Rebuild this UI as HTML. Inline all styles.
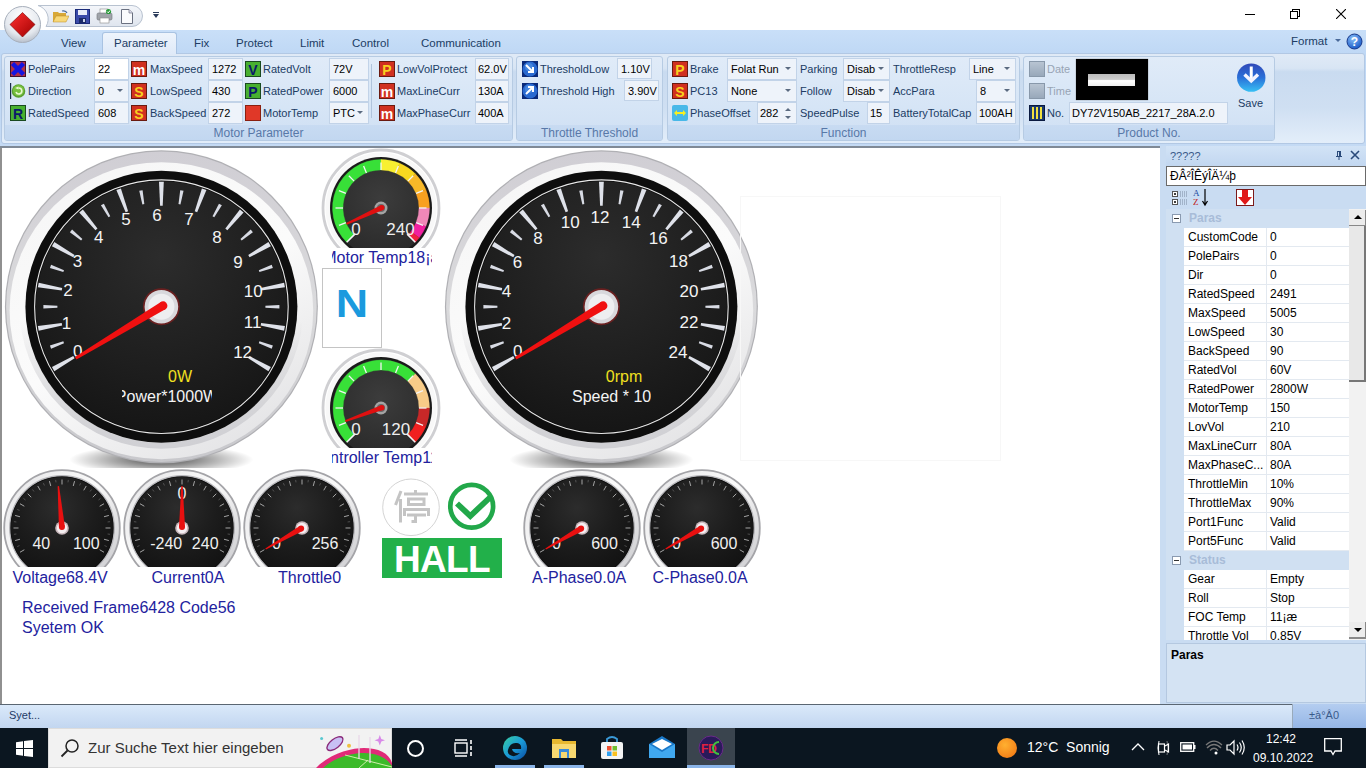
<!DOCTYPE html><html><head><meta charset="utf-8"><style>
*{margin:0;padding:0;box-sizing:border-box}
html,body{width:1366px;height:768px;overflow:hidden;background:#fff;font-family:"Liberation Sans",sans-serif;position:relative}
.a{position:absolute}
.t{position:absolute;white-space:nowrap;line-height:1}
</style></head><body>
<div class="a" style="left:0;top:0;width:1366px;height:30px;background:#fff"></div>
<div class="a" style="left:0;top:30px;width:1366px;height:116px;background:linear-gradient(#c9dff8 0,#bfd8f5 20%,#c4daf4 100%)"></div>
<div class="a" style="left:1px;top:53px;width:1364px;height:91px;border:1px solid #b2c8e4;border-radius:3px;background:linear-gradient(#e0eaf6 0%,#d8e5f4 16%,#c9dbf0 20%,#cfdff2 60%,#e3eefa 100%)"></div>
<div class="a" style="left:0;top:146px;width:1162px;height:2px;background:#808a96"></div>
<div class="a" style="left:0;top:148px;width:1160px;height:556px;background:#fff;border-left:2px solid #909090"></div>
<div class="a" style="left:1160px;top:146px;width:206px;height:558px;background:#c9dcf2"></div>
<svg class="a" style="left:0px;top:148px" width="322" height="320" viewBox="0 0 322 320">
<defs><radialGradient id="g1sh" cx="0.5" cy="0.5" r="0.5"><stop offset="0.3" stop-color="#000" stop-opacity="0.5"/><stop offset="1" stop-color="#000" stop-opacity="0"/></radialGradient><linearGradient id="g1ch" x1="0" y1="0" x2="0" y2="1"><stop offset="0" stop-color="#d0ced4"/><stop offset="0.5" stop-color="#dadadc"/><stop offset="1" stop-color="#c8c8cc"/></linearGradient><linearGradient id="g1cl" x1="0.2" y1="0" x2="0.8" y2="1"><stop offset="0" stop-color="#f6f6f6"/><stop offset="0.5" stop-color="#fbfbfb"/><stop offset="1" stop-color="#e2e2e4"/></linearGradient><radialGradient id="g1fc" cx="0.5" cy="0.3" r="0.75"><stop offset="0" stop-color="#2c2c2c"/><stop offset="0.6" stop-color="#1e1e1e"/><stop offset="1" stop-color="#141414"/></radialGradient><linearGradient id="g1ib" x1="0" y1="0" x2="0" y2="1"><stop offset="0" stop-color="#c0c0c4" stop-opacity="0"/><stop offset="0.55" stop-color="#c0c0c4" stop-opacity="0"/><stop offset="1" stop-color="#d0d0d4" stop-opacity="1"/></linearGradient><linearGradient id="g1tk" x1="0" y1="0" x2="1" y2="0"><stop offset="0" stop-color="#c8ccd8"/><stop offset="1" stop-color="#f0f2f8"/></linearGradient></defs>
<ellipse cx="161.4" cy="311.7" rx="92" ry="15" fill="url(#g1sh)"/>
<circle cx="161.4" cy="158.7" r="156.5" fill="#b0b0b4"/>
<circle cx="161.4" cy="158.7" r="155.3" fill="url(#g1ch)"/>
<ellipse cx="161.4" cy="162.7" rx="151.8" ry="148.5" fill="url(#g1cl)"/>
<circle cx="161.4" cy="158.7" r="139" fill="none" stroke="url(#g1ib)" stroke-width="6"/>
<circle cx="161.4" cy="158.7" r="136" fill="#0e0e0e"/>
<circle cx="161.4" cy="158.7" r="126.8" fill="none" stroke="#e8e8e8" stroke-width="1.1"/>
<circle cx="161.4" cy="158.7" r="125.5" fill="url(#g1fc)"/>
<path d="M51.95 219.12 L54.35 223.28 L74.58 210.33 L73.28 208.07 Z" fill="#dfe2ea"/>
<path d="M37.88 178.04 L38.72 182.77 L62.16 177.52 L61.71 174.96 Z" fill="#dfe2ea"/>
<path d="M38.72 134.63 L37.88 139.36 L61.71 142.44 L62.16 139.88 Z" fill="#dfe2ea"/>
<path d="M54.35 94.12 L51.95 98.28 L73.28 109.33 L74.58 107.07 Z" fill="#dfe2ea"/>
<path d="M82.89 61.40 L79.21 64.49 L95.48 82.17 L97.47 80.49 Z" fill="#dfe2ea"/>
<path d="M120.90 40.42 L116.39 42.06 L125.63 64.24 L128.08 63.35 Z" fill="#dfe2ea"/>
<path d="M163.80 33.70 L159.00 33.70 L160.10 57.70 L162.70 57.70 Z" fill="#dfe2ea"/>
<path d="M206.41 42.06 L201.90 40.42 L194.72 63.35 L197.17 64.24 Z" fill="#dfe2ea"/>
<path d="M243.59 64.49 L239.91 61.40 L225.33 80.49 L227.32 82.17 Z" fill="#dfe2ea"/>
<path d="M270.85 98.28 L268.45 94.12 L248.22 107.07 L249.52 109.33 Z" fill="#dfe2ea"/>
<path d="M284.92 139.36 L284.08 134.63 L260.64 139.88 L261.09 142.44 Z" fill="#dfe2ea"/>
<path d="M284.08 182.77 L284.92 178.04 L261.09 174.96 L260.64 177.52 Z" fill="#dfe2ea"/>
<path d="M268.45 223.28 L270.85 219.12 L249.52 208.07 L248.22 210.33 Z" fill="#dfe2ea"/>
<path d="M49.93 197.46 L51.10 200.66 L64.01 195.21 L63.33 193.33 Z" fill="#d8dbe4"/>
<path d="M43.40 157.00 L43.40 160.40 L57.40 159.70 L57.40 157.70 Z" fill="#d8dbe4"/>
<path d="M51.10 116.74 L49.93 119.94 L63.33 124.07 L64.01 122.19 Z" fill="#d8dbe4"/>
<path d="M72.10 81.55 L69.91 84.15 L81.09 92.62 L82.37 91.08 Z" fill="#d8dbe4"/>
<path d="M103.87 55.66 L100.93 57.36 L108.53 69.13 L110.27 68.13 Z" fill="#d8dbe4"/>
<path d="M142.58 42.20 L139.24 42.79 L142.36 56.45 L144.33 56.11 Z" fill="#d8dbe4"/>
<path d="M183.56 42.79 L180.22 42.20 L178.47 56.11 L180.44 56.45 Z" fill="#d8dbe4"/>
<path d="M221.87 57.36 L218.93 55.66 L212.53 68.13 L214.27 69.13 Z" fill="#d8dbe4"/>
<path d="M252.89 84.15 L250.70 81.55 L240.43 91.08 L241.71 92.62 Z" fill="#d8dbe4"/>
<path d="M272.87 119.94 L271.70 116.74 L258.79 122.19 L259.47 124.07 Z" fill="#d8dbe4"/>
<path d="M279.40 160.40 L279.40 157.00 L265.40 157.70 L265.40 159.70 Z" fill="#d8dbe4"/>
<path d="M271.70 200.66 L272.87 197.46 L259.47 193.33 L258.79 195.21 Z" fill="#d8dbe4"/>
<text x="77.8" y="209.4" font-size="17" font-family="Liberation Sans" fill="#f4f4f4" text-anchor="middle">0</text>
<text x="66.6" y="181.0" font-size="17" font-family="Liberation Sans" fill="#f4f4f4" text-anchor="middle">1</text>
<text x="67.9" y="148.4" font-size="17" font-family="Liberation Sans" fill="#f4f4f4" text-anchor="middle">2</text>
<text x="77.4" y="119.2" font-size="17" font-family="Liberation Sans" fill="#f4f4f4" text-anchor="middle">3</text>
<text x="98.8" y="94.6" font-size="17" font-family="Liberation Sans" fill="#f4f4f4" text-anchor="middle">4</text>
<text x="125.9" y="77.4" font-size="17" font-family="Liberation Sans" fill="#f4f4f4" text-anchor="middle">5</text>
<text x="156.9" y="73.2" font-size="17" font-family="Liberation Sans" fill="#f4f4f4" text-anchor="middle">6</text>
<text x="189.1" y="77.4" font-size="17" font-family="Liberation Sans" fill="#f4f4f4" text-anchor="middle">7</text>
<text x="217.0" y="94.6" font-size="17" font-family="Liberation Sans" fill="#f4f4f4" text-anchor="middle">8</text>
<text x="237.9" y="120.0" font-size="17" font-family="Liberation Sans" fill="#f4f4f4" text-anchor="middle">9</text>
<text x="253.3" y="149.0" font-size="17" font-family="Liberation Sans" fill="#f4f4f4" text-anchor="middle">10</text>
<text x="252.7" y="180.0" font-size="17" font-family="Liberation Sans" fill="#f4f4f4" text-anchor="middle">11</text>
<text x="242.6" y="210.0" font-size="17" font-family="Liberation Sans" fill="#f4f4f4" text-anchor="middle">12</text>
</svg>
<svg class="a" style="left:440px;top:148px" width="322" height="320" viewBox="0 0 322 320">
<defs><radialGradient id="g2sh" cx="0.5" cy="0.5" r="0.5"><stop offset="0.3" stop-color="#000" stop-opacity="0.5"/><stop offset="1" stop-color="#000" stop-opacity="0"/></radialGradient><linearGradient id="g2ch" x1="0" y1="0" x2="0" y2="1"><stop offset="0" stop-color="#d0ced4"/><stop offset="0.5" stop-color="#dadadc"/><stop offset="1" stop-color="#c8c8cc"/></linearGradient><linearGradient id="g2cl" x1="0.2" y1="0" x2="0.8" y2="1"><stop offset="0" stop-color="#f6f6f6"/><stop offset="0.5" stop-color="#fbfbfb"/><stop offset="1" stop-color="#e2e2e4"/></linearGradient><radialGradient id="g2fc" cx="0.5" cy="0.3" r="0.75"><stop offset="0" stop-color="#2c2c2c"/><stop offset="0.6" stop-color="#1e1e1e"/><stop offset="1" stop-color="#141414"/></radialGradient><linearGradient id="g2ib" x1="0" y1="0" x2="0" y2="1"><stop offset="0" stop-color="#c0c0c4" stop-opacity="0"/><stop offset="0.55" stop-color="#c0c0c4" stop-opacity="0"/><stop offset="1" stop-color="#d0d0d4" stop-opacity="1"/></linearGradient><linearGradient id="g2tk" x1="0" y1="0" x2="1" y2="0"><stop offset="0" stop-color="#c8ccd8"/><stop offset="1" stop-color="#f0f2f8"/></linearGradient></defs>
<ellipse cx="161.4" cy="311.7" rx="92" ry="15" fill="url(#g2sh)"/>
<circle cx="161.4" cy="158.7" r="156.5" fill="#b0b0b4"/>
<circle cx="161.4" cy="158.7" r="155.3" fill="url(#g2ch)"/>
<ellipse cx="161.4" cy="162.7" rx="151.8" ry="148.5" fill="url(#g2cl)"/>
<circle cx="161.4" cy="158.7" r="139" fill="none" stroke="url(#g2ib)" stroke-width="6"/>
<circle cx="161.4" cy="158.7" r="136" fill="#0e0e0e"/>
<circle cx="161.4" cy="158.7" r="126.8" fill="none" stroke="#e8e8e8" stroke-width="1.1"/>
<circle cx="161.4" cy="158.7" r="125.5" fill="url(#g2fc)"/>
<path d="M51.95 219.12 L54.35 223.28 L74.58 210.33 L73.28 208.07 Z" fill="#dfe2ea"/>
<path d="M37.88 178.04 L38.72 182.77 L62.16 177.52 L61.71 174.96 Z" fill="#dfe2ea"/>
<path d="M38.72 134.63 L37.88 139.36 L61.71 142.44 L62.16 139.88 Z" fill="#dfe2ea"/>
<path d="M54.35 94.12 L51.95 98.28 L73.28 109.33 L74.58 107.07 Z" fill="#dfe2ea"/>
<path d="M82.89 61.40 L79.21 64.49 L95.48 82.17 L97.47 80.49 Z" fill="#dfe2ea"/>
<path d="M120.90 40.42 L116.39 42.06 L125.63 64.24 L128.08 63.35 Z" fill="#dfe2ea"/>
<path d="M163.80 33.70 L159.00 33.70 L160.10 57.70 L162.70 57.70 Z" fill="#dfe2ea"/>
<path d="M206.41 42.06 L201.90 40.42 L194.72 63.35 L197.17 64.24 Z" fill="#dfe2ea"/>
<path d="M243.59 64.49 L239.91 61.40 L225.33 80.49 L227.32 82.17 Z" fill="#dfe2ea"/>
<path d="M270.85 98.28 L268.45 94.12 L248.22 107.07 L249.52 109.33 Z" fill="#dfe2ea"/>
<path d="M284.92 139.36 L284.08 134.63 L260.64 139.88 L261.09 142.44 Z" fill="#dfe2ea"/>
<path d="M284.08 182.77 L284.92 178.04 L261.09 174.96 L260.64 177.52 Z" fill="#dfe2ea"/>
<path d="M268.45 223.28 L270.85 219.12 L249.52 208.07 L248.22 210.33 Z" fill="#dfe2ea"/>
<path d="M49.93 197.46 L51.10 200.66 L64.01 195.21 L63.33 193.33 Z" fill="#d8dbe4"/>
<path d="M43.40 157.00 L43.40 160.40 L57.40 159.70 L57.40 157.70 Z" fill="#d8dbe4"/>
<path d="M51.10 116.74 L49.93 119.94 L63.33 124.07 L64.01 122.19 Z" fill="#d8dbe4"/>
<path d="M72.10 81.55 L69.91 84.15 L81.09 92.62 L82.37 91.08 Z" fill="#d8dbe4"/>
<path d="M103.87 55.66 L100.93 57.36 L108.53 69.13 L110.27 68.13 Z" fill="#d8dbe4"/>
<path d="M142.58 42.20 L139.24 42.79 L142.36 56.45 L144.33 56.11 Z" fill="#d8dbe4"/>
<path d="M183.56 42.79 L180.22 42.20 L178.47 56.11 L180.44 56.45 Z" fill="#d8dbe4"/>
<path d="M221.87 57.36 L218.93 55.66 L212.53 68.13 L214.27 69.13 Z" fill="#d8dbe4"/>
<path d="M252.89 84.15 L250.70 81.55 L240.43 91.08 L241.71 92.62 Z" fill="#d8dbe4"/>
<path d="M272.87 119.94 L271.70 116.74 L258.79 122.19 L259.47 124.07 Z" fill="#d8dbe4"/>
<path d="M279.40 160.40 L279.40 157.00 L265.40 157.70 L265.40 159.70 Z" fill="#d8dbe4"/>
<path d="M271.70 200.66 L272.87 197.46 L259.47 193.33 L258.79 195.21 Z" fill="#d8dbe4"/>
<text x="77.8" y="209.4" font-size="17" font-family="Liberation Sans" fill="#f4f4f4" text-anchor="middle">0</text>
<text x="66.6" y="181.0" font-size="17" font-family="Liberation Sans" fill="#f4f4f4" text-anchor="middle">2</text>
<text x="66.6" y="149.0" font-size="17" font-family="Liberation Sans" fill="#f4f4f4" text-anchor="middle">4</text>
<text x="77.4" y="120.0" font-size="17" font-family="Liberation Sans" fill="#f4f4f4" text-anchor="middle">6</text>
<text x="98.0" y="96.0" font-size="17" font-family="Liberation Sans" fill="#f4f4f4" text-anchor="middle">8</text>
<text x="130.2" y="79.7" font-size="17" font-family="Liberation Sans" fill="#f4f4f4" text-anchor="middle">10</text>
<text x="159.9" y="75.4" font-size="17" font-family="Liberation Sans" fill="#f4f4f4" text-anchor="middle">12</text>
<text x="191.2" y="79.7" font-size="17" font-family="Liberation Sans" fill="#f4f4f4" text-anchor="middle">14</text>
<text x="218.3" y="96.0" font-size="17" font-family="Liberation Sans" fill="#f4f4f4" text-anchor="middle">16</text>
<text x="238.5" y="119.0" font-size="17" font-family="Liberation Sans" fill="#f4f4f4" text-anchor="middle">18</text>
<text x="248.9" y="149.0" font-size="17" font-family="Liberation Sans" fill="#f4f4f4" text-anchor="middle">20</text>
<text x="249.0" y="180.0" font-size="17" font-family="Liberation Sans" fill="#f4f4f4" text-anchor="middle">22</text>
<text x="238.0" y="210.0" font-size="17" font-family="Liberation Sans" fill="#f4f4f4" text-anchor="middle">24</text>
</svg>
<svg class="a" style="left:0;top:0;overflow:visible" width="1" height="1">
<circle cx="161.4" cy="306.7" r="18.5" fill="#6a2020"/>
<circle cx="161.4" cy="306.7" r="16.8" fill="#d8d8dc"/>
<circle cx="161.4" cy="306.7" r="13" fill="#eeeef0"/>
<path d="M160.90 301.98 L74.91 356.92 L76.46 359.49 L165.33 309.36 Z" fill="#f01010"/><circle cx="163.11" cy="305.67" r="4.3" fill="#f01010"/>
</svg>
<div class="t" style="left:140px;top:369px;width:80px;text-align:center;font-size:16px;color:#f0e020">0W</div>
<div class="a" style="left:122px;top:385px;width:90px;height:22px;overflow:hidden"><div class="t" style="left:45px;top:4px;font-size:16px;color:#f4f4f4;transform:translateX(-50%)">Power*1000W</div></div>
<svg class="a" style="left:0;top:0;overflow:visible" width="1" height="1">
<circle cx="601.4" cy="306.7" r="18.5" fill="#6a2020"/>
<circle cx="601.4" cy="306.7" r="16.8" fill="#d8d8dc"/>
<circle cx="601.4" cy="306.7" r="13" fill="#eeeef0"/>
<path d="M600.90 301.98 L514.91 356.92 L516.46 359.49 L605.33 309.36 Z" fill="#f01010"/><circle cx="603.11" cy="305.67" r="4.3" fill="#f01010"/>
</svg>
<div class="t" style="left:584px;top:369px;width:80px;text-align:center;font-size:16px;color:#f0e020">0rpm</div>
<div class="a" style="left:560px;top:385px;width:91px;height:22px;overflow:hidden"><div class="t" style="left:12px;top:4px;font-size:16px;color:#f4f4f4;">Speed * 1000rpm</div></div>
<svg class="a" style="left:321px;top:147.7px" width="120" height="100.30000000000001" viewBox="321 147.7 120 100.30000000000001">
<defs><radialGradient id="g3f" cx="0.5" cy="0.4" r="0.6"><stop offset="0" stop-color="#3c3c3c"/><stop offset="1" stop-color="#2a2a2a"/></radialGradient></defs>
<circle cx="381" cy="207.7" r="58" fill="none" stroke="#cfcfd2" stroke-width="2.8"/>
<circle cx="381" cy="207.7" r="55.5" fill="#f8f8f8"/>
<circle cx="381" cy="207.7" r="51" fill="#1a1a1a"/>
<circle cx="381" cy="207.7" r="48.5" fill="url(#g3f)"/>
<path d="M346.71 241.99 A48.5 48.5 0 0 1 381.00 159.20 L381.00 169.70 A38 38 0 0 0 354.13 234.57 Z" fill="#38e038" stroke="#38e038" stroke-width="0.3"/>
<path d="M381.00 159.20 A48.5 48.5 0 0 1 399.56 162.89 L395.54 172.59 A38 38 0 0 0 381.00 169.70 Z" fill="#f8f030" stroke="#f8f030" stroke-width="0.3"/>
<path d="M399.56 162.89 A48.5 48.5 0 0 1 415.29 173.41 L407.87 180.83 A38 38 0 0 0 395.54 172.59 Z" fill="#f8d820" stroke="#f8d820" stroke-width="0.3"/>
<path d="M415.29 173.41 A48.5 48.5 0 0 1 425.81 189.14 L416.11 193.16 A38 38 0 0 0 407.87 180.83 Z" fill="#f8b828" stroke="#f8b828" stroke-width="0.3"/>
<path d="M425.81 189.14 A48.5 48.5 0 0 1 429.50 207.70 L419.00 207.70 A38 38 0 0 0 416.11 193.16 Z" fill="#f8a020" stroke="#f8a020" stroke-width="0.3"/>
<path d="M429.50 207.70 A48.5 48.5 0 0 1 425.81 226.26 L416.11 222.24 A38 38 0 0 0 419.00 207.70 Z" fill="#f088b8" stroke="#f088b8" stroke-width="0.3"/>
<path d="M425.81 226.26 A48.5 48.5 0 0 1 419.22 237.56 L410.94 231.10 A38 38 0 0 0 416.11 222.24 Z" fill="#f020a0" stroke="#f020a0" stroke-width="0.3"/>
<path d="M419.22 237.56 A48.5 48.5 0 0 1 415.29 241.99 L407.87 234.57 A38 38 0 0 0 410.94 231.10 Z" fill="#f02040" stroke="#f02040" stroke-width="0.3"/>
<line x1="354.84" y1="233.86" x2="346.71" y2="241.99" stroke="#f4f4f4" stroke-width="1.6"/>
<line x1="345.89" y1="222.24" x2="338.96" y2="225.11" stroke="#f4f4f4" stroke-width="1.3"/>
<line x1="343.00" y1="207.70" x2="335.50" y2="207.70" stroke="#f4f4f4" stroke-width="1.3"/>
<line x1="345.89" y1="193.16" x2="338.96" y2="190.29" stroke="#f4f4f4" stroke-width="1.3"/>
<line x1="354.13" y1="180.83" x2="348.83" y2="175.53" stroke="#f4f4f4" stroke-width="1.3"/>
<line x1="366.46" y1="172.59" x2="363.59" y2="165.66" stroke="#f4f4f4" stroke-width="1.3"/>
<line x1="381.00" y1="169.70" x2="381.00" y2="162.20" stroke="#f4f4f4" stroke-width="1.3"/>
<line x1="395.54" y1="172.59" x2="398.41" y2="165.66" stroke="#f4f4f4" stroke-width="1.3"/>
<line x1="407.87" y1="180.83" x2="413.17" y2="175.53" stroke="#f4f4f4" stroke-width="1.3"/>
<line x1="416.11" y1="193.16" x2="423.04" y2="190.29" stroke="#f4f4f4" stroke-width="1.3"/>
<line x1="419.00" y1="207.70" x2="426.50" y2="207.70" stroke="#f4f4f4" stroke-width="1.3"/>
<line x1="416.11" y1="222.24" x2="423.04" y2="225.11" stroke="#f4f4f4" stroke-width="1.3"/>
<line x1="407.16" y1="233.86" x2="415.29" y2="241.99" stroke="#f4f4f4" stroke-width="1.6"/>
<text x="356" y="234.7" font-size="17" font-family="Liberation Sans" fill="#eee" text-anchor="middle">0</text>
<text x="400.5" y="234.7" font-size="17" font-family="Liberation Sans" fill="#eee" text-anchor="middle">240</text>
<circle cx="381" cy="207.7" r="6.5" fill="#a4a4a4"/><circle cx="381" cy="207.7" r="4" fill="#6a6a6a"/>
<path d="M380.82 204.92 L346.07 222.70 L346.91 224.52 L383.00 209.64 Z" fill="#e01010"/><circle cx="381.91" cy="207.28" r="2.6" fill="#e01010"/>
</svg>
<div class="a" style="left:332px;top:248px;width:100px;height:20px;overflow:hidden"><div class="t" style="left:52px;top:2px;transform:translateX(-50%);font-size:16px;color:#22229e">Motor Temp18¡æ</div></div>
<svg class="a" style="left:321px;top:348px" width="120" height="100" viewBox="321 348 120 100">
<defs><radialGradient id="g4f" cx="0.5" cy="0.4" r="0.6"><stop offset="0" stop-color="#3c3c3c"/><stop offset="1" stop-color="#2a2a2a"/></radialGradient></defs>
<circle cx="381" cy="408" r="58" fill="none" stroke="#cfcfd2" stroke-width="2.8"/>
<circle cx="381" cy="408" r="55.5" fill="#f8f8f8"/>
<circle cx="381" cy="408" r="51" fill="#1a1a1a"/>
<circle cx="381" cy="408" r="48.5" fill="url(#g4f)"/>
<path d="M346.71 442.29 A48.5 48.5 0 0 1 415.29 373.71 L407.87 381.13 A38 38 0 0 0 354.13 434.87 Z" fill="#38e038" stroke="#38e038" stroke-width="0.3"/>
<path d="M415.29 373.71 A48.5 48.5 0 0 1 429.50 408.00 L419.00 408.00 A38 38 0 0 0 407.87 381.13 Z" fill="#f8cc88" stroke="#f8cc88" stroke-width="0.3"/>
<path d="M429.50 408.00 A48.5 48.5 0 0 1 425.81 426.56 L416.11 422.54 A38 38 0 0 0 419.00 408.00 Z" fill="#c82828" stroke="#c82828" stroke-width="0.3"/>
<path d="M425.81 426.56 A48.5 48.5 0 0 1 415.29 442.29 L407.87 434.87 A38 38 0 0 0 416.11 422.54 Z" fill="#f02020" stroke="#f02020" stroke-width="0.3"/>
<line x1="354.84" y1="434.16" x2="346.71" y2="442.29" stroke="#f4f4f4" stroke-width="1.6"/>
<line x1="345.89" y1="422.54" x2="338.96" y2="425.41" stroke="#f4f4f4" stroke-width="1.3"/>
<line x1="343.00" y1="408.00" x2="335.50" y2="408.00" stroke="#f4f4f4" stroke-width="1.3"/>
<line x1="345.89" y1="393.46" x2="338.96" y2="390.59" stroke="#f4f4f4" stroke-width="1.3"/>
<line x1="354.13" y1="381.13" x2="348.83" y2="375.83" stroke="#f4f4f4" stroke-width="1.3"/>
<line x1="366.46" y1="372.89" x2="363.59" y2="365.96" stroke="#f4f4f4" stroke-width="1.3"/>
<line x1="381.00" y1="370.00" x2="381.00" y2="362.50" stroke="#f4f4f4" stroke-width="1.3"/>
<line x1="395.54" y1="372.89" x2="398.41" y2="365.96" stroke="#f4f4f4" stroke-width="1.3"/>
<line x1="407.87" y1="381.13" x2="413.17" y2="375.83" stroke="#f4f4f4" stroke-width="1.3"/>
<line x1="416.11" y1="393.46" x2="423.04" y2="390.59" stroke="#f4f4f4" stroke-width="1.3"/>
<line x1="419.00" y1="408.00" x2="426.50" y2="408.00" stroke="#f4f4f4" stroke-width="1.3"/>
<line x1="416.11" y1="422.54" x2="423.04" y2="425.41" stroke="#f4f4f4" stroke-width="1.3"/>
<line x1="407.16" y1="434.16" x2="415.29" y2="442.29" stroke="#f4f4f4" stroke-width="1.6"/>
<text x="356" y="435" font-size="17" font-family="Liberation Sans" fill="#eee" text-anchor="middle">0</text>
<text x="396" y="435" font-size="17" font-family="Liberation Sans" fill="#eee" text-anchor="middle">120</text>
<circle cx="381" cy="408" r="6.5" fill="#a4a4a4"/><circle cx="381" cy="408" r="4" fill="#6a6a6a"/>
<path d="M381.04 405.21 L345.00 420.21 L345.69 422.09 L382.84 410.09 Z" fill="#e01010"/><circle cx="381.94" cy="407.65" r="2.6" fill="#e01010"/>
</svg>
<div class="a" style="left:332px;top:448px;width:100px;height:20px;overflow:hidden"><div class="t" style="left:52px;top:2px;transform:translateX(-50%);font-size:16px;color:#22229e">Controller Temp11¡æ</div></div>
<div class="a" style="left:322px;top:268px;width:60px;height:80px;border:1px solid #c4c4c4;background:#fff"></div>
<div class="t" style="left:322px;top:285px;width:60px;text-align:center;font-size:38px;font-weight:bold;color:#1a9ade;transform:scaleX(1.18)">N</div>
<svg class="a" style="left:1.7000000000000028px;top:467.6px" width="120" height="99.39999999999998" viewBox="1.7000000000000028 467.6 120 99.39999999999998">
<defs><linearGradient id="g5c" x1="0" y1="0" x2="1" y2="1"><stop offset="0" stop-color="#e4e4e6"/><stop offset="0.45" stop-color="#fafafa"/><stop offset="1" stop-color="#c4c4c8"/></linearGradient><radialGradient id="g5f" cx="0.45" cy="0.3" r="0.7"><stop offset="0" stop-color="#2c2c2c"/><stop offset="0.55" stop-color="#1c1c1c"/><stop offset="1" stop-color="#121212"/></radialGradient></defs>
<circle cx="61.7" cy="527.6" r="57.8" fill="url(#g5c)" stroke="#a4a4a8" stroke-width="1.8"/>
<circle cx="61.7" cy="527.6" r="52.3" fill="#0e0e0e" stroke="#b8b8bc" stroke-width="1.2"/>
<circle cx="61.7" cy="527.6" r="51" fill="url(#g5f)"/>
<line x1="24.03" y1="549.35" x2="19.70" y2="551.85" stroke="#d4d4d4" stroke-width="1" opacity="0.75"/>
<line x1="19.68" y1="538.86" x2="14.85" y2="540.15" stroke="#d4d4d4" stroke-width="1" opacity="0.75"/>
<line x1="18.20" y1="527.60" x2="13.20" y2="527.60" stroke="#d4d4d4" stroke-width="1" opacity="0.75"/>
<line x1="19.68" y1="516.34" x2="14.85" y2="515.05" stroke="#d4d4d4" stroke-width="1" opacity="0.75"/>
<line x1="24.03" y1="505.85" x2="19.70" y2="503.35" stroke="#d4d4d4" stroke-width="1" opacity="0.75"/>
<line x1="30.94" y1="496.84" x2="27.41" y2="493.31" stroke="#d4d4d4" stroke-width="1" opacity="0.75"/>
<line x1="39.95" y1="489.93" x2="37.45" y2="485.60" stroke="#d4d4d4" stroke-width="1" opacity="0.75"/>
<line x1="50.44" y1="485.58" x2="49.15" y2="480.75" stroke="#d4d4d4" stroke-width="1" opacity="0.75"/>
<line x1="61.70" y1="484.10" x2="61.70" y2="479.10" stroke="#d4d4d4" stroke-width="1" opacity="0.75"/>
<line x1="72.96" y1="485.58" x2="74.25" y2="480.75" stroke="#d4d4d4" stroke-width="1" opacity="0.75"/>
<line x1="83.45" y1="489.93" x2="85.95" y2="485.60" stroke="#d4d4d4" stroke-width="1" opacity="0.75"/>
<line x1="92.46" y1="496.84" x2="95.99" y2="493.31" stroke="#d4d4d4" stroke-width="1" opacity="0.75"/>
<line x1="99.37" y1="505.85" x2="103.70" y2="503.35" stroke="#d4d4d4" stroke-width="1" opacity="0.75"/>
<line x1="103.72" y1="516.34" x2="108.55" y2="515.05" stroke="#d4d4d4" stroke-width="1" opacity="0.75"/>
<line x1="105.20" y1="527.60" x2="110.20" y2="527.60" stroke="#d4d4d4" stroke-width="1" opacity="0.75"/>
<line x1="103.72" y1="538.86" x2="108.55" y2="540.15" stroke="#d4d4d4" stroke-width="1" opacity="0.75"/>
<line x1="99.37" y1="549.35" x2="103.70" y2="551.85" stroke="#d4d4d4" stroke-width="1" opacity="0.75"/>
<line x1="19.20" y1="545.20" x2="16.89" y2="546.16" stroke="#a0a0a0" stroke-width="0.8" opacity="0.5"/>
<line x1="16.09" y1="533.60" x2="13.61" y2="533.93" stroke="#a0a0a0" stroke-width="0.8" opacity="0.5"/>
<line x1="16.09" y1="521.60" x2="13.61" y2="521.27" stroke="#a0a0a0" stroke-width="0.8" opacity="0.5"/>
<line x1="19.20" y1="510.00" x2="16.89" y2="509.04" stroke="#a0a0a0" stroke-width="0.8" opacity="0.5"/>
<line x1="25.21" y1="499.60" x2="23.22" y2="498.08" stroke="#a0a0a0" stroke-width="0.8" opacity="0.5"/>
<line x1="33.70" y1="491.11" x2="32.18" y2="489.12" stroke="#a0a0a0" stroke-width="0.8" opacity="0.5"/>
<line x1="44.10" y1="485.10" x2="43.14" y2="482.79" stroke="#a0a0a0" stroke-width="0.8" opacity="0.5"/>
<line x1="55.70" y1="481.99" x2="55.37" y2="479.51" stroke="#a0a0a0" stroke-width="0.8" opacity="0.5"/>
<line x1="67.70" y1="481.99" x2="68.03" y2="479.51" stroke="#a0a0a0" stroke-width="0.8" opacity="0.5"/>
<line x1="79.30" y1="485.10" x2="80.26" y2="482.79" stroke="#a0a0a0" stroke-width="0.8" opacity="0.5"/>
<line x1="89.70" y1="491.11" x2="91.22" y2="489.12" stroke="#a0a0a0" stroke-width="0.8" opacity="0.5"/>
<line x1="98.19" y1="499.60" x2="100.18" y2="498.08" stroke="#a0a0a0" stroke-width="0.8" opacity="0.5"/>
<line x1="104.20" y1="510.00" x2="106.51" y2="509.04" stroke="#a0a0a0" stroke-width="0.8" opacity="0.5"/>
<line x1="107.31" y1="521.60" x2="109.79" y2="521.27" stroke="#a0a0a0" stroke-width="0.8" opacity="0.5"/>
<line x1="107.31" y1="533.60" x2="109.79" y2="533.93" stroke="#a0a0a0" stroke-width="0.8" opacity="0.5"/>
<line x1="104.20" y1="545.20" x2="106.51" y2="546.16" stroke="#a0a0a0" stroke-width="0.8" opacity="0.5"/>
<text x="41" y="548.6" font-size="16" font-family="Liberation Sans" fill="#f0f0f0" text-anchor="middle">40</text>
<text x="86" y="548.6" font-size="16" font-family="Liberation Sans" fill="#f0f0f0" text-anchor="middle">100</text>
<circle cx="61.7" cy="527.6" r="6.8" fill="#c8b8bc"/><circle cx="61.7" cy="527.6" r="5.2" fill="#f4eef0"/>
<path d="M64.60 526.34 L58.74 485.70 L57.34 485.82 L58.62 526.87 Z" fill="#e81010"/><circle cx="61.61" cy="526.60" r="3.0" fill="#e81010"/>
</svg>
<div class="t" style="left:12.5px;top:570px;font-size:16px;color:#22229e">Voltage68.4V</div>
<svg class="a" style="left:121.80000000000001px;top:467.6px" width="120" height="99.39999999999998" viewBox="121.80000000000001 467.6 120 99.39999999999998">
<defs><linearGradient id="g6c" x1="0" y1="0" x2="1" y2="1"><stop offset="0" stop-color="#e4e4e6"/><stop offset="0.45" stop-color="#fafafa"/><stop offset="1" stop-color="#c4c4c8"/></linearGradient><radialGradient id="g6f" cx="0.45" cy="0.3" r="0.7"><stop offset="0" stop-color="#2c2c2c"/><stop offset="0.55" stop-color="#1c1c1c"/><stop offset="1" stop-color="#121212"/></radialGradient></defs>
<circle cx="181.8" cy="527.6" r="57.8" fill="url(#g6c)" stroke="#a4a4a8" stroke-width="1.8"/>
<circle cx="181.8" cy="527.6" r="52.3" fill="#0e0e0e" stroke="#b8b8bc" stroke-width="1.2"/>
<circle cx="181.8" cy="527.6" r="51" fill="url(#g6f)"/>
<line x1="144.13" y1="549.35" x2="139.80" y2="551.85" stroke="#d4d4d4" stroke-width="1" opacity="0.75"/>
<line x1="139.78" y1="538.86" x2="134.95" y2="540.15" stroke="#d4d4d4" stroke-width="1" opacity="0.75"/>
<line x1="138.30" y1="527.60" x2="133.30" y2="527.60" stroke="#d4d4d4" stroke-width="1" opacity="0.75"/>
<line x1="139.78" y1="516.34" x2="134.95" y2="515.05" stroke="#d4d4d4" stroke-width="1" opacity="0.75"/>
<line x1="144.13" y1="505.85" x2="139.80" y2="503.35" stroke="#d4d4d4" stroke-width="1" opacity="0.75"/>
<line x1="151.04" y1="496.84" x2="147.51" y2="493.31" stroke="#d4d4d4" stroke-width="1" opacity="0.75"/>
<line x1="160.05" y1="489.93" x2="157.55" y2="485.60" stroke="#d4d4d4" stroke-width="1" opacity="0.75"/>
<line x1="170.54" y1="485.58" x2="169.25" y2="480.75" stroke="#d4d4d4" stroke-width="1" opacity="0.75"/>
<line x1="181.80" y1="484.10" x2="181.80" y2="479.10" stroke="#d4d4d4" stroke-width="1" opacity="0.75"/>
<line x1="193.06" y1="485.58" x2="194.35" y2="480.75" stroke="#d4d4d4" stroke-width="1" opacity="0.75"/>
<line x1="203.55" y1="489.93" x2="206.05" y2="485.60" stroke="#d4d4d4" stroke-width="1" opacity="0.75"/>
<line x1="212.56" y1="496.84" x2="216.09" y2="493.31" stroke="#d4d4d4" stroke-width="1" opacity="0.75"/>
<line x1="219.47" y1="505.85" x2="223.80" y2="503.35" stroke="#d4d4d4" stroke-width="1" opacity="0.75"/>
<line x1="223.82" y1="516.34" x2="228.65" y2="515.05" stroke="#d4d4d4" stroke-width="1" opacity="0.75"/>
<line x1="225.30" y1="527.60" x2="230.30" y2="527.60" stroke="#d4d4d4" stroke-width="1" opacity="0.75"/>
<line x1="223.82" y1="538.86" x2="228.65" y2="540.15" stroke="#d4d4d4" stroke-width="1" opacity="0.75"/>
<line x1="219.47" y1="549.35" x2="223.80" y2="551.85" stroke="#d4d4d4" stroke-width="1" opacity="0.75"/>
<line x1="139.30" y1="545.20" x2="136.99" y2="546.16" stroke="#a0a0a0" stroke-width="0.8" opacity="0.5"/>
<line x1="136.19" y1="533.60" x2="133.71" y2="533.93" stroke="#a0a0a0" stroke-width="0.8" opacity="0.5"/>
<line x1="136.19" y1="521.60" x2="133.71" y2="521.27" stroke="#a0a0a0" stroke-width="0.8" opacity="0.5"/>
<line x1="139.30" y1="510.00" x2="136.99" y2="509.04" stroke="#a0a0a0" stroke-width="0.8" opacity="0.5"/>
<line x1="145.31" y1="499.60" x2="143.32" y2="498.08" stroke="#a0a0a0" stroke-width="0.8" opacity="0.5"/>
<line x1="153.80" y1="491.11" x2="152.28" y2="489.12" stroke="#a0a0a0" stroke-width="0.8" opacity="0.5"/>
<line x1="164.20" y1="485.10" x2="163.24" y2="482.79" stroke="#a0a0a0" stroke-width="0.8" opacity="0.5"/>
<line x1="175.80" y1="481.99" x2="175.47" y2="479.51" stroke="#a0a0a0" stroke-width="0.8" opacity="0.5"/>
<line x1="187.80" y1="481.99" x2="188.13" y2="479.51" stroke="#a0a0a0" stroke-width="0.8" opacity="0.5"/>
<line x1="199.40" y1="485.10" x2="200.36" y2="482.79" stroke="#a0a0a0" stroke-width="0.8" opacity="0.5"/>
<line x1="209.80" y1="491.11" x2="211.32" y2="489.12" stroke="#a0a0a0" stroke-width="0.8" opacity="0.5"/>
<line x1="218.29" y1="499.60" x2="220.28" y2="498.08" stroke="#a0a0a0" stroke-width="0.8" opacity="0.5"/>
<line x1="224.30" y1="510.00" x2="226.61" y2="509.04" stroke="#a0a0a0" stroke-width="0.8" opacity="0.5"/>
<line x1="227.41" y1="521.60" x2="229.89" y2="521.27" stroke="#a0a0a0" stroke-width="0.8" opacity="0.5"/>
<line x1="227.41" y1="533.60" x2="229.89" y2="533.93" stroke="#a0a0a0" stroke-width="0.8" opacity="0.5"/>
<line x1="224.30" y1="545.20" x2="226.61" y2="546.16" stroke="#a0a0a0" stroke-width="0.8" opacity="0.5"/>
<text x="166" y="548.6" font-size="16" font-family="Liberation Sans" fill="#f0f0f0" text-anchor="middle">-240</text>
<text x="205" y="548.6" font-size="16" font-family="Liberation Sans" fill="#f0f0f0" text-anchor="middle">240</text>
<text x="181.8" y="498.6" font-size="16" font-family="Liberation Sans" fill="#f0f0f0" text-anchor="middle">0</text>
<circle cx="181.8" cy="527.6" r="6.8" fill="#c8b8bc"/><circle cx="181.8" cy="527.6" r="5.2" fill="#f4eef0"/>
<path d="M184.80 526.60 L182.50 485.60 L181.10 485.60 L178.80 526.60 Z" fill="#e81010"/><circle cx="181.80" cy="526.60" r="3.0" fill="#e81010"/>
</svg>
<div class="t" style="left:151.5px;top:570px;font-size:16px;color:#22229e">Current0A</div>
<svg class="a" style="left:242px;top:467.6px" width="120" height="99.39999999999998" viewBox="242 467.6 120 99.39999999999998">
<defs><linearGradient id="g7c" x1="0" y1="0" x2="1" y2="1"><stop offset="0" stop-color="#e4e4e6"/><stop offset="0.45" stop-color="#fafafa"/><stop offset="1" stop-color="#c4c4c8"/></linearGradient><radialGradient id="g7f" cx="0.45" cy="0.3" r="0.7"><stop offset="0" stop-color="#2c2c2c"/><stop offset="0.55" stop-color="#1c1c1c"/><stop offset="1" stop-color="#121212"/></radialGradient></defs>
<circle cx="302" cy="527.6" r="57.8" fill="url(#g7c)" stroke="#a4a4a8" stroke-width="1.8"/>
<circle cx="302" cy="527.6" r="52.3" fill="#0e0e0e" stroke="#b8b8bc" stroke-width="1.2"/>
<circle cx="302" cy="527.6" r="51" fill="url(#g7f)"/>
<line x1="264.33" y1="549.35" x2="260.00" y2="551.85" stroke="#d4d4d4" stroke-width="1" opacity="0.75"/>
<line x1="259.98" y1="538.86" x2="255.15" y2="540.15" stroke="#d4d4d4" stroke-width="1" opacity="0.75"/>
<line x1="258.50" y1="527.60" x2="253.50" y2="527.60" stroke="#d4d4d4" stroke-width="1" opacity="0.75"/>
<line x1="259.98" y1="516.34" x2="255.15" y2="515.05" stroke="#d4d4d4" stroke-width="1" opacity="0.75"/>
<line x1="264.33" y1="505.85" x2="260.00" y2="503.35" stroke="#d4d4d4" stroke-width="1" opacity="0.75"/>
<line x1="271.24" y1="496.84" x2="267.71" y2="493.31" stroke="#d4d4d4" stroke-width="1" opacity="0.75"/>
<line x1="280.25" y1="489.93" x2="277.75" y2="485.60" stroke="#d4d4d4" stroke-width="1" opacity="0.75"/>
<line x1="290.74" y1="485.58" x2="289.45" y2="480.75" stroke="#d4d4d4" stroke-width="1" opacity="0.75"/>
<line x1="302.00" y1="484.10" x2="302.00" y2="479.10" stroke="#d4d4d4" stroke-width="1" opacity="0.75"/>
<line x1="313.26" y1="485.58" x2="314.55" y2="480.75" stroke="#d4d4d4" stroke-width="1" opacity="0.75"/>
<line x1="323.75" y1="489.93" x2="326.25" y2="485.60" stroke="#d4d4d4" stroke-width="1" opacity="0.75"/>
<line x1="332.76" y1="496.84" x2="336.29" y2="493.31" stroke="#d4d4d4" stroke-width="1" opacity="0.75"/>
<line x1="339.67" y1="505.85" x2="344.00" y2="503.35" stroke="#d4d4d4" stroke-width="1" opacity="0.75"/>
<line x1="344.02" y1="516.34" x2="348.85" y2="515.05" stroke="#d4d4d4" stroke-width="1" opacity="0.75"/>
<line x1="345.50" y1="527.60" x2="350.50" y2="527.60" stroke="#d4d4d4" stroke-width="1" opacity="0.75"/>
<line x1="344.02" y1="538.86" x2="348.85" y2="540.15" stroke="#d4d4d4" stroke-width="1" opacity="0.75"/>
<line x1="339.67" y1="549.35" x2="344.00" y2="551.85" stroke="#d4d4d4" stroke-width="1" opacity="0.75"/>
<line x1="259.50" y1="545.20" x2="257.19" y2="546.16" stroke="#a0a0a0" stroke-width="0.8" opacity="0.5"/>
<line x1="256.39" y1="533.60" x2="253.91" y2="533.93" stroke="#a0a0a0" stroke-width="0.8" opacity="0.5"/>
<line x1="256.39" y1="521.60" x2="253.91" y2="521.27" stroke="#a0a0a0" stroke-width="0.8" opacity="0.5"/>
<line x1="259.50" y1="510.00" x2="257.19" y2="509.04" stroke="#a0a0a0" stroke-width="0.8" opacity="0.5"/>
<line x1="265.51" y1="499.60" x2="263.52" y2="498.08" stroke="#a0a0a0" stroke-width="0.8" opacity="0.5"/>
<line x1="274.00" y1="491.11" x2="272.48" y2="489.12" stroke="#a0a0a0" stroke-width="0.8" opacity="0.5"/>
<line x1="284.40" y1="485.10" x2="283.44" y2="482.79" stroke="#a0a0a0" stroke-width="0.8" opacity="0.5"/>
<line x1="296.00" y1="481.99" x2="295.67" y2="479.51" stroke="#a0a0a0" stroke-width="0.8" opacity="0.5"/>
<line x1="308.00" y1="481.99" x2="308.33" y2="479.51" stroke="#a0a0a0" stroke-width="0.8" opacity="0.5"/>
<line x1="319.60" y1="485.10" x2="320.56" y2="482.79" stroke="#a0a0a0" stroke-width="0.8" opacity="0.5"/>
<line x1="330.00" y1="491.11" x2="331.52" y2="489.12" stroke="#a0a0a0" stroke-width="0.8" opacity="0.5"/>
<line x1="338.49" y1="499.60" x2="340.48" y2="498.08" stroke="#a0a0a0" stroke-width="0.8" opacity="0.5"/>
<line x1="344.50" y1="510.00" x2="346.81" y2="509.04" stroke="#a0a0a0" stroke-width="0.8" opacity="0.5"/>
<line x1="347.61" y1="521.60" x2="350.09" y2="521.27" stroke="#a0a0a0" stroke-width="0.8" opacity="0.5"/>
<line x1="347.61" y1="533.60" x2="350.09" y2="533.93" stroke="#a0a0a0" stroke-width="0.8" opacity="0.5"/>
<line x1="344.50" y1="545.20" x2="346.81" y2="546.16" stroke="#a0a0a0" stroke-width="0.8" opacity="0.5"/>
<text x="276.5" y="548.6" font-size="16" font-family="Liberation Sans" fill="#f0f0f0" text-anchor="middle">0</text>
<text x="325" y="548.6" font-size="16" font-family="Liberation Sans" fill="#f0f0f0" text-anchor="middle">256</text>
<circle cx="302" cy="527.6" r="6.8" fill="#c8b8bc"/><circle cx="302" cy="527.6" r="5.2" fill="#f4eef0"/>
<path d="M299.63 525.50 L265.28 547.99 L265.98 549.21 L302.63 530.70 Z" fill="#e81010"/><circle cx="301.13" cy="528.10" r="3.0" fill="#e81010"/>
</svg>
<div class="t" style="left:278px;top:570px;font-size:16px;color:#22229e">Throttle0</div>
<svg class="a" style="left:521.5px;top:467.6px" width="120" height="99.39999999999998" viewBox="521.5 467.6 120 99.39999999999998">
<defs><linearGradient id="g8c" x1="0" y1="0" x2="1" y2="1"><stop offset="0" stop-color="#e4e4e6"/><stop offset="0.45" stop-color="#fafafa"/><stop offset="1" stop-color="#c4c4c8"/></linearGradient><radialGradient id="g8f" cx="0.45" cy="0.3" r="0.7"><stop offset="0" stop-color="#2c2c2c"/><stop offset="0.55" stop-color="#1c1c1c"/><stop offset="1" stop-color="#121212"/></radialGradient></defs>
<circle cx="581.5" cy="527.6" r="57.8" fill="url(#g8c)" stroke="#a4a4a8" stroke-width="1.8"/>
<circle cx="581.5" cy="527.6" r="52.3" fill="#0e0e0e" stroke="#b8b8bc" stroke-width="1.2"/>
<circle cx="581.5" cy="527.6" r="51" fill="url(#g8f)"/>
<line x1="543.83" y1="549.35" x2="539.50" y2="551.85" stroke="#d4d4d4" stroke-width="1" opacity="0.75"/>
<line x1="539.48" y1="538.86" x2="534.65" y2="540.15" stroke="#d4d4d4" stroke-width="1" opacity="0.75"/>
<line x1="538.00" y1="527.60" x2="533.00" y2="527.60" stroke="#d4d4d4" stroke-width="1" opacity="0.75"/>
<line x1="539.48" y1="516.34" x2="534.65" y2="515.05" stroke="#d4d4d4" stroke-width="1" opacity="0.75"/>
<line x1="543.83" y1="505.85" x2="539.50" y2="503.35" stroke="#d4d4d4" stroke-width="1" opacity="0.75"/>
<line x1="550.74" y1="496.84" x2="547.21" y2="493.31" stroke="#d4d4d4" stroke-width="1" opacity="0.75"/>
<line x1="559.75" y1="489.93" x2="557.25" y2="485.60" stroke="#d4d4d4" stroke-width="1" opacity="0.75"/>
<line x1="570.24" y1="485.58" x2="568.95" y2="480.75" stroke="#d4d4d4" stroke-width="1" opacity="0.75"/>
<line x1="581.50" y1="484.10" x2="581.50" y2="479.10" stroke="#d4d4d4" stroke-width="1" opacity="0.75"/>
<line x1="592.76" y1="485.58" x2="594.05" y2="480.75" stroke="#d4d4d4" stroke-width="1" opacity="0.75"/>
<line x1="603.25" y1="489.93" x2="605.75" y2="485.60" stroke="#d4d4d4" stroke-width="1" opacity="0.75"/>
<line x1="612.26" y1="496.84" x2="615.79" y2="493.31" stroke="#d4d4d4" stroke-width="1" opacity="0.75"/>
<line x1="619.17" y1="505.85" x2="623.50" y2="503.35" stroke="#d4d4d4" stroke-width="1" opacity="0.75"/>
<line x1="623.52" y1="516.34" x2="628.35" y2="515.05" stroke="#d4d4d4" stroke-width="1" opacity="0.75"/>
<line x1="625.00" y1="527.60" x2="630.00" y2="527.60" stroke="#d4d4d4" stroke-width="1" opacity="0.75"/>
<line x1="623.52" y1="538.86" x2="628.35" y2="540.15" stroke="#d4d4d4" stroke-width="1" opacity="0.75"/>
<line x1="619.17" y1="549.35" x2="623.50" y2="551.85" stroke="#d4d4d4" stroke-width="1" opacity="0.75"/>
<line x1="539.00" y1="545.20" x2="536.69" y2="546.16" stroke="#a0a0a0" stroke-width="0.8" opacity="0.5"/>
<line x1="535.89" y1="533.60" x2="533.41" y2="533.93" stroke="#a0a0a0" stroke-width="0.8" opacity="0.5"/>
<line x1="535.89" y1="521.60" x2="533.41" y2="521.27" stroke="#a0a0a0" stroke-width="0.8" opacity="0.5"/>
<line x1="539.00" y1="510.00" x2="536.69" y2="509.04" stroke="#a0a0a0" stroke-width="0.8" opacity="0.5"/>
<line x1="545.01" y1="499.60" x2="543.02" y2="498.08" stroke="#a0a0a0" stroke-width="0.8" opacity="0.5"/>
<line x1="553.50" y1="491.11" x2="551.98" y2="489.12" stroke="#a0a0a0" stroke-width="0.8" opacity="0.5"/>
<line x1="563.90" y1="485.10" x2="562.94" y2="482.79" stroke="#a0a0a0" stroke-width="0.8" opacity="0.5"/>
<line x1="575.50" y1="481.99" x2="575.17" y2="479.51" stroke="#a0a0a0" stroke-width="0.8" opacity="0.5"/>
<line x1="587.50" y1="481.99" x2="587.83" y2="479.51" stroke="#a0a0a0" stroke-width="0.8" opacity="0.5"/>
<line x1="599.10" y1="485.10" x2="600.06" y2="482.79" stroke="#a0a0a0" stroke-width="0.8" opacity="0.5"/>
<line x1="609.50" y1="491.11" x2="611.02" y2="489.12" stroke="#a0a0a0" stroke-width="0.8" opacity="0.5"/>
<line x1="617.99" y1="499.60" x2="619.98" y2="498.08" stroke="#a0a0a0" stroke-width="0.8" opacity="0.5"/>
<line x1="624.00" y1="510.00" x2="626.31" y2="509.04" stroke="#a0a0a0" stroke-width="0.8" opacity="0.5"/>
<line x1="627.11" y1="521.60" x2="629.59" y2="521.27" stroke="#a0a0a0" stroke-width="0.8" opacity="0.5"/>
<line x1="627.11" y1="533.60" x2="629.59" y2="533.93" stroke="#a0a0a0" stroke-width="0.8" opacity="0.5"/>
<line x1="624.00" y1="545.20" x2="626.31" y2="546.16" stroke="#a0a0a0" stroke-width="0.8" opacity="0.5"/>
<text x="556" y="548.6" font-size="16" font-family="Liberation Sans" fill="#f0f0f0" text-anchor="middle">0</text>
<text x="604" y="548.6" font-size="16" font-family="Liberation Sans" fill="#f0f0f0" text-anchor="middle">600</text>
<circle cx="581.5" cy="527.6" r="6.8" fill="#c8b8bc"/><circle cx="581.5" cy="527.6" r="5.2" fill="#f4eef0"/>
<path d="M579.13 525.50 L544.78 547.99 L545.48 549.21 L582.13 530.70 Z" fill="#e81010"/><circle cx="580.63" cy="528.10" r="3.0" fill="#e81010"/>
</svg>
<div class="t" style="left:532px;top:570px;font-size:16px;color:#22229e">A-Phase0.0A</div>
<svg class="a" style="left:642px;top:467.6px" width="120" height="99.39999999999998" viewBox="642 467.6 120 99.39999999999998">
<defs><linearGradient id="g9c" x1="0" y1="0" x2="1" y2="1"><stop offset="0" stop-color="#e4e4e6"/><stop offset="0.45" stop-color="#fafafa"/><stop offset="1" stop-color="#c4c4c8"/></linearGradient><radialGradient id="g9f" cx="0.45" cy="0.3" r="0.7"><stop offset="0" stop-color="#2c2c2c"/><stop offset="0.55" stop-color="#1c1c1c"/><stop offset="1" stop-color="#121212"/></radialGradient></defs>
<circle cx="702" cy="527.6" r="57.8" fill="url(#g9c)" stroke="#a4a4a8" stroke-width="1.8"/>
<circle cx="702" cy="527.6" r="52.3" fill="#0e0e0e" stroke="#b8b8bc" stroke-width="1.2"/>
<circle cx="702" cy="527.6" r="51" fill="url(#g9f)"/>
<line x1="664.33" y1="549.35" x2="660.00" y2="551.85" stroke="#d4d4d4" stroke-width="1" opacity="0.75"/>
<line x1="659.98" y1="538.86" x2="655.15" y2="540.15" stroke="#d4d4d4" stroke-width="1" opacity="0.75"/>
<line x1="658.50" y1="527.60" x2="653.50" y2="527.60" stroke="#d4d4d4" stroke-width="1" opacity="0.75"/>
<line x1="659.98" y1="516.34" x2="655.15" y2="515.05" stroke="#d4d4d4" stroke-width="1" opacity="0.75"/>
<line x1="664.33" y1="505.85" x2="660.00" y2="503.35" stroke="#d4d4d4" stroke-width="1" opacity="0.75"/>
<line x1="671.24" y1="496.84" x2="667.71" y2="493.31" stroke="#d4d4d4" stroke-width="1" opacity="0.75"/>
<line x1="680.25" y1="489.93" x2="677.75" y2="485.60" stroke="#d4d4d4" stroke-width="1" opacity="0.75"/>
<line x1="690.74" y1="485.58" x2="689.45" y2="480.75" stroke="#d4d4d4" stroke-width="1" opacity="0.75"/>
<line x1="702.00" y1="484.10" x2="702.00" y2="479.10" stroke="#d4d4d4" stroke-width="1" opacity="0.75"/>
<line x1="713.26" y1="485.58" x2="714.55" y2="480.75" stroke="#d4d4d4" stroke-width="1" opacity="0.75"/>
<line x1="723.75" y1="489.93" x2="726.25" y2="485.60" stroke="#d4d4d4" stroke-width="1" opacity="0.75"/>
<line x1="732.76" y1="496.84" x2="736.29" y2="493.31" stroke="#d4d4d4" stroke-width="1" opacity="0.75"/>
<line x1="739.67" y1="505.85" x2="744.00" y2="503.35" stroke="#d4d4d4" stroke-width="1" opacity="0.75"/>
<line x1="744.02" y1="516.34" x2="748.85" y2="515.05" stroke="#d4d4d4" stroke-width="1" opacity="0.75"/>
<line x1="745.50" y1="527.60" x2="750.50" y2="527.60" stroke="#d4d4d4" stroke-width="1" opacity="0.75"/>
<line x1="744.02" y1="538.86" x2="748.85" y2="540.15" stroke="#d4d4d4" stroke-width="1" opacity="0.75"/>
<line x1="739.67" y1="549.35" x2="744.00" y2="551.85" stroke="#d4d4d4" stroke-width="1" opacity="0.75"/>
<line x1="659.50" y1="545.20" x2="657.19" y2="546.16" stroke="#a0a0a0" stroke-width="0.8" opacity="0.5"/>
<line x1="656.39" y1="533.60" x2="653.91" y2="533.93" stroke="#a0a0a0" stroke-width="0.8" opacity="0.5"/>
<line x1="656.39" y1="521.60" x2="653.91" y2="521.27" stroke="#a0a0a0" stroke-width="0.8" opacity="0.5"/>
<line x1="659.50" y1="510.00" x2="657.19" y2="509.04" stroke="#a0a0a0" stroke-width="0.8" opacity="0.5"/>
<line x1="665.51" y1="499.60" x2="663.52" y2="498.08" stroke="#a0a0a0" stroke-width="0.8" opacity="0.5"/>
<line x1="674.00" y1="491.11" x2="672.48" y2="489.12" stroke="#a0a0a0" stroke-width="0.8" opacity="0.5"/>
<line x1="684.40" y1="485.10" x2="683.44" y2="482.79" stroke="#a0a0a0" stroke-width="0.8" opacity="0.5"/>
<line x1="696.00" y1="481.99" x2="695.67" y2="479.51" stroke="#a0a0a0" stroke-width="0.8" opacity="0.5"/>
<line x1="708.00" y1="481.99" x2="708.33" y2="479.51" stroke="#a0a0a0" stroke-width="0.8" opacity="0.5"/>
<line x1="719.60" y1="485.10" x2="720.56" y2="482.79" stroke="#a0a0a0" stroke-width="0.8" opacity="0.5"/>
<line x1="730.00" y1="491.11" x2="731.52" y2="489.12" stroke="#a0a0a0" stroke-width="0.8" opacity="0.5"/>
<line x1="738.49" y1="499.60" x2="740.48" y2="498.08" stroke="#a0a0a0" stroke-width="0.8" opacity="0.5"/>
<line x1="744.50" y1="510.00" x2="746.81" y2="509.04" stroke="#a0a0a0" stroke-width="0.8" opacity="0.5"/>
<line x1="747.61" y1="521.60" x2="750.09" y2="521.27" stroke="#a0a0a0" stroke-width="0.8" opacity="0.5"/>
<line x1="747.61" y1="533.60" x2="750.09" y2="533.93" stroke="#a0a0a0" stroke-width="0.8" opacity="0.5"/>
<line x1="744.50" y1="545.20" x2="746.81" y2="546.16" stroke="#a0a0a0" stroke-width="0.8" opacity="0.5"/>
<text x="676.5" y="548.6" font-size="16" font-family="Liberation Sans" fill="#f0f0f0" text-anchor="middle">0</text>
<text x="724" y="548.6" font-size="16" font-family="Liberation Sans" fill="#f0f0f0" text-anchor="middle">600</text>
<circle cx="702" cy="527.6" r="6.8" fill="#c8b8bc"/><circle cx="702" cy="527.6" r="5.2" fill="#f4eef0"/>
<path d="M699.63 525.50 L665.28 547.99 L665.98 549.21 L702.63 530.70 Z" fill="#e81010"/><circle cx="701.13" cy="528.10" r="3.0" fill="#e81010"/>
</svg>
<div class="t" style="left:652.5px;top:570px;font-size:16px;color:#22229e">C-Phase0.0A</div>
<svg class="a" style="left:378px;top:474px" width="128" height="64" viewBox="0 0 128 64"><circle cx="33" cy="33.3" r="28.3" fill="#fff" stroke="#cfcfcf" stroke-width="0.9"/><g stroke="#c4c4c4" stroke-width="3" fill="none" stroke-linecap="butt"><path d="M23 17 L17.5 31"/><path d="M22.5 25 L22.5 48.5"/><path d="M37.5 16 L37.5 20"/><path d="M26 20 L50 20"/><rect x="30.5" y="25" width="15.5" height="5.5"/><path d="M26.5 42 L26.5 35.5 L50.5 35.5 L50.5 42"/><path d="M29 41 L48 41"/><path d="M37.5 41 L37.5 47.5 L33.5 47.5"/></g><circle cx="93.7" cy="32.3" r="21.4" fill="#fff" stroke="#22a84a" stroke-width="4.7"/><path d="M79 29.5 L92.3 42 L113 22.5" stroke="#22a84a" stroke-width="5.8" fill="none" stroke-linejoin="miter"/></svg>
<div class="a" style="left:382px;top:538px;width:120px;height:40px;background:#22b04a"></div>
<div class="t" style="left:382px;top:541px;width:120px;text-align:center;font-size:37px;font-weight:bold;color:#fff;letter-spacing:-0.6px">HALL</div>
<div class="t" style="left:22px;top:600px;font-size:16px;color:#22229e">Received Frame6428 Code56</div>
<div class="t" style="left:22px;top:620px;font-size:16px;color:#22229e">Syetem OK</div>
<div class="a" style="left:740px;top:196px;width:261px;height:265px;border:1px solid #f7f7f7"></div>
<svg class="a" style="left:3px;top:5px" width="40" height="40" viewBox="0 0 40 40"><defs><radialGradient id="ab" cx="0.5" cy="0.3" r="0.7"><stop offset="0" stop-color="#ffffff"/><stop offset="0.7" stop-color="#e4e8ee"/><stop offset="1" stop-color="#b8c0cc"/></radialGradient><linearGradient id="rd" x1="0" y1="0" x2="1" y2="1"><stop offset="0" stop-color="#ff3030"/><stop offset="1" stop-color="#a00000"/></linearGradient></defs><circle cx="19.5" cy="19.5" r="18" fill="url(#ab)" stroke="#a8b0bc"/><path d="M19.5 7.5 L32 19.5 L19.5 32 L7 19.5 Z" fill="url(#rd)" stroke="#700" stroke-width="0.6"/></svg>
<svg class="a" style="left:36px;top:4px" width="110" height="24" viewBox="0 0 110 24"><defs><linearGradient id="qg" x1="0" y1="0" x2="0" y2="1"><stop offset="0" stop-color="#f4f6fa"/><stop offset="1" stop-color="#dfe5ee"/></linearGradient></defs><path d="M2 1.5 L96 1.5 A10.5 10.5 0 0 1 96 22.5 L10 22.5 A14 14 0 0 0 2 1.5 Z" fill="url(#qg)" stroke="#b8c2d0"/></svg>
<svg class="a" style="left:52px;top:8px" width="17" height="16" viewBox="0 0 17 16"><path d="M1 4 L6 4 L7 5 L14 5 L14 14 L1 14 Z" fill="#d8a838"/><path d="M1 14 L4 8 L17 8 L14 14 Z" fill="#f8d878" stroke="#b88820" stroke-width="0.5"/><path d="M10 3 A4 3 0 0 1 15 5" stroke="#4a6a9a" fill="none" stroke-width="1.2"/></svg>
<svg class="a" style="left:75px;top:9px" width="15" height="15" viewBox="0 0 15 15"><rect x="0.5" y="0.5" width="14" height="14" fill="#3a4aa8" stroke="#1a2a78"/><rect x="3" y="1" width="9" height="5" fill="#e8ecf8"/><rect x="4" y="9" width="7" height="5" fill="#1a2a68"/><rect x="8" y="10" width="2" height="3" fill="#c8d0e8"/></svg>
<svg class="a" style="left:96px;top:8px" width="17" height="16" viewBox="0 0 17 16"><rect x="4" y="1" width="8" height="5" fill="#fff" stroke="#888" stroke-width="0.6"/><rect x="1" y="5" width="15" height="7" rx="1.5" fill="#a0a4aa" stroke="#70747a" stroke-width="0.6"/><rect x="4" y="10" width="9" height="5" fill="#fff" stroke="#888" stroke-width="0.6"/><circle cx="12.5" cy="3.5" r="2.6" fill="#2a9a3a"/><path d="M11 3.5 L12.3 4.8 L14 2.5" stroke="#fff" stroke-width="1" fill="none"/></svg>
<svg class="a" style="left:121px;top:9px" width="12" height="15" viewBox="0 0 12 15"><path d="M0.5 0.5 L8 0.5 L11.5 4 L11.5 14.5 L0.5 14.5 Z" fill="#fafbfd" stroke="#6a7080"/><path d="M8 0.5 L8 4 L11.5 4" fill="#dde" stroke="#6a7080" stroke-width="0.7"/></svg>
<div class="a" style="left:153px;top:12px;width:6px;height:1px;background:#2a3a5a"></div><div class="a" style="left:153px;top:14px;width:0;height:0;border-left:3px solid transparent;border-right:3px solid transparent;border-top:4px solid #2a3a5a"></div>
<div class="a" style="left:1245px;top:14px;width:10px;height:1px;background:#000"></div>
<div class="a" style="left:1292px;top:9px;width:8px;height:8px;border:1px solid #000;background:#fff"></div><div class="a" style="left:1290px;top:11px;width:8px;height:8px;border:1px solid #000;background:#fff"></div>
<svg class="a" style="left:1336px;top:9px" width="10" height="10" viewBox="0 0 10 10"><path d="M0 0 L10 10 M10 0 L0 10" stroke="#000" stroke-width="1.1"/></svg>
<div class="a" style="left:102px;top:32px;width:75px;height:22px;border:1px solid #a9c3e2;border-bottom:none;border-radius:3px 3px 0 0;background:linear-gradient(#eef4fc,#dfeaf8)"></div>
<div class="t" style="left:61px;top:38px;font-size:11.5px;color:#203c64;">View</div>
<div class="t" style="left:114px;top:38px;font-size:11.5px;color:#203c64;">Parameter</div>
<div class="t" style="left:194px;top:38px;font-size:11.5px;color:#203c64;">Fix</div>
<div class="t" style="left:236px;top:38px;font-size:11.5px;color:#203c64;">Protect</div>
<div class="t" style="left:300px;top:38px;font-size:11.5px;color:#203c64;">Limit</div>
<div class="t" style="left:352px;top:38px;font-size:11.5px;color:#203c64;">Control</div>
<div class="t" style="left:421px;top:38px;font-size:11.5px;color:#203c64;">Communication</div>
<div class="t" style="left:1291px;top:36px;font-size:11.5px;color:#203c64;">Format</div>
<div class="a" style="left:1335px;top:39px;width:0;height:0;border-left:3px solid transparent;border-right:3px solid transparent;border-top:3px solid #4a6a9a"></div>
<svg class="a" style="left:1346px;top:33px" width="17" height="17" viewBox="0 0 17 17"><defs><radialGradient id="hg" cx="0.4" cy="0.3" r="0.7"><stop offset="0" stop-color="#8ac0f8"/><stop offset="1" stop-color="#1a5ac8"/></radialGradient></defs><circle cx="8.5" cy="8.5" r="7.5" fill="url(#hg)" stroke="#1a3a8a"/><text x="8.5" y="13" font-size="12" font-weight="bold" text-anchor="middle" fill="#fff" font-family="Liberation Sans">?</text></svg>
<div class="a" style="left:4px;top:56px;width:509px;height:85px;border:1px solid #b6cbe3;border-radius:3px;background:linear-gradient(#e0ebf8 0%,#d6e5f6 60%,#cfdff3 100%);overflow:hidden"><div class="a" style="left:0;top:68px;width:507px;height:15px;background:linear-gradient(#c8dbf2,#c2d7f0)"></div><div class="t" style="left:0;top:70px;width:507px;text-align:center;font-size:12px;color:#5878a8">Motor Parameter</div></div>
<div class="a" style="left:516px;top:56px;width:147px;height:85px;border:1px solid #b6cbe3;border-radius:3px;background:linear-gradient(#e0ebf8 0%,#d6e5f6 60%,#cfdff3 100%);overflow:hidden"><div class="a" style="left:0;top:68px;width:145px;height:15px;background:linear-gradient(#c8dbf2,#c2d7f0)"></div><div class="t" style="left:0;top:70px;width:145px;text-align:center;font-size:12px;color:#5878a8">Throttle Threshold</div></div>
<div class="a" style="left:667px;top:56px;width:353px;height:85px;border:1px solid #b6cbe3;border-radius:3px;background:linear-gradient(#e0ebf8 0%,#d6e5f6 60%,#cfdff3 100%);overflow:hidden"><div class="a" style="left:0;top:68px;width:351px;height:15px;background:linear-gradient(#c8dbf2,#c2d7f0)"></div><div class="t" style="left:0;top:70px;width:351px;text-align:center;font-size:12px;color:#5878a8">Function</div></div>
<div class="a" style="left:1023px;top:56px;width:252px;height:85px;border:1px solid #b6cbe3;border-radius:3px;background:linear-gradient(#e0ebf8 0%,#d6e5f6 60%,#cfdff3 100%);overflow:hidden"><div class="a" style="left:0;top:68px;width:250px;height:15px;background:linear-gradient(#c8dbf2,#c2d7f0)"></div><div class="t" style="left:0;top:70px;width:250px;text-align:center;font-size:12px;color:#5878a8">Product No.</div></div>
<svg class="a" style="left:10px;top:61px" width="16" height="16" viewBox="0 0 16 16"><rect x="0.5" y="0.5" width="15" height="15" fill="#b03048" stroke="#40102a"/><path d="M2.5 2.5 L13.5 13.5 M13.5 2.5 L2.5 13.5" stroke="#1414e0" stroke-width="4.5"/><rect x="5" y="5" width="6" height="6" fill="#1414e0"/></svg>
<svg class="a" style="left:10px;top:83px" width="16" height="16" viewBox="0 0 16 16"><rect x="0" y="0" width="1.2" height="16" fill="#1a2a4a"/><circle cx="8.5" cy="8" r="6.8" fill="#5aa030"/><circle cx="8.5" cy="7.5" r="5.5" fill="#78c040"/><path d="M6 9 A3 3 0 1 0 8.5 5" stroke="#e8f8d0" stroke-width="1.6" fill="none"/><path d="M5 5 L8.5 3.5 L8.5 6.5 Z" fill="#e8f8d0"/></svg>
<div class="a" style="left:10px;top:105px;width:16px;height:16px;background:#48b030;border:1px solid #1a4a20"><div class="t" style="left:0;top:1px;width:14px;text-align:center;font-size:14px;font-weight:bold;color:#0a1a6a">R</div></div>
<div class="t" style="left:28px;top:64px;font-size:11px;color:#203c64;">PolePairs</div>
<div class="t" style="left:28px;top:86px;font-size:11px;color:#203c64;">Direction</div>
<div class="t" style="left:28px;top:108px;font-size:11px;color:#203c64;">RatedSpeed</div>
<div class="a" style="left:94px;top:58px;width:35px;height:22px;background:#fff;border:1px solid #c2d3e8"><div class="t" style="left:3px;top:5px;font-size:11px;color:#000">22</div></div>
<div class="a" style="left:94px;top:80px;width:35px;height:22px;background:#eef3fa;border:1px solid #c2d3e8"><div class="t" style="left:3px;top:5px;font-size:11px;color:#000">0</div><div class="a" style="left:22px;top:8px;width:0;height:0;border-left:3px solid transparent;border-right:3px solid transparent;border-top:3px solid #5a6a80"></div></div>
<div class="a" style="left:94px;top:102px;width:35px;height:22px;background:#eef3fa;border:1px solid #c2d3e8"><div class="t" style="left:3px;top:5px;font-size:11px;color:#000">608</div></div>
<div class="a" style="left:131px;top:61px;width:16px;height:16px;background:#d03020;border:1px solid #6a1a10"><div class="t" style="left:0;top:1px;width:14px;text-align:center;font-size:14px;font-weight:bold;color:#fff">m</div></div>
<div class="a" style="left:131px;top:83px;width:16px;height:16px;background:#d03020;border:1px solid #6a1a10"><div class="t" style="left:0;top:1px;width:14px;text-align:center;font-size:14px;font-weight:bold;color:#f8d020">S</div></div>
<div class="a" style="left:131px;top:105px;width:16px;height:16px;background:#d03020;border:1px solid #6a1a10"><div class="t" style="left:0;top:1px;width:14px;text-align:center;font-size:14px;font-weight:bold;color:#f8d020">S</div></div>
<div class="t" style="left:150px;top:64px;font-size:11px;color:#203c64;">MaxSpeed</div>
<div class="t" style="left:150px;top:86px;font-size:11px;color:#203c64;">LowSpeed</div>
<div class="t" style="left:150px;top:108px;font-size:11px;color:#203c64;">BackSpeed</div>
<div class="a" style="left:208px;top:58px;width:35px;height:22px;background:#eef3fa;border:1px solid #c2d3e8"><div class="t" style="left:3px;top:5px;font-size:11px;color:#000">1272</div></div>
<div class="a" style="left:208px;top:80px;width:35px;height:22px;background:#eef3fa;border:1px solid #c2d3e8"><div class="t" style="left:3px;top:5px;font-size:11px;color:#000">430</div></div>
<div class="a" style="left:208px;top:102px;width:35px;height:22px;background:#eef3fa;border:1px solid #c2d3e8"><div class="t" style="left:3px;top:5px;font-size:11px;color:#000">272</div></div>
<div class="a" style="left:245px;top:61px;width:16px;height:16px;background:#48b030;border:1px solid #1a4a20"><div class="t" style="left:0;top:1px;width:14px;text-align:center;font-size:14px;font-weight:bold;color:#0a1a6a">V</div></div>
<div class="a" style="left:245px;top:83px;width:16px;height:16px;background:#48b030;border:1px solid #1a4a20"><div class="t" style="left:0;top:1px;width:14px;text-align:center;font-size:14px;font-weight:bold;color:#0a1a6a">P</div></div>
<div class="a" style="left:245px;top:105px;width:16px;height:16px;background:#e03828;border:1px solid #8a2010"></div>
<div class="t" style="left:263px;top:64px;font-size:11px;color:#203c64;">RatedVolt</div>
<div class="t" style="left:263px;top:86px;font-size:11px;color:#203c64;">RatedPower</div>
<div class="t" style="left:263px;top:108px;font-size:11px;color:#203c64;">MotorTemp</div>
<div class="a" style="left:329px;top:58px;width:40px;height:22px;background:#eef3fa;border:1px solid #c2d3e8"><div class="t" style="left:3px;top:5px;font-size:11px;color:#000">72V</div></div>
<div class="a" style="left:329px;top:80px;width:40px;height:22px;background:#eef3fa;border:1px solid #c2d3e8"><div class="t" style="left:3px;top:5px;font-size:11px;color:#000">6000</div></div>
<div class="a" style="left:329px;top:102px;width:40px;height:22px;background:#eef3fa;border:1px solid #c2d3e8"><div class="t" style="left:3px;top:5px;font-size:11px;color:#000">PTC</div><div class="a" style="left:27px;top:8px;width:0;height:0;border-left:3px solid transparent;border-right:3px solid transparent;border-top:3px solid #5a6a80"></div></div>
<div class="a" style="left:371px;top:64px;width:1px;height:54px;background:#b0c4dc"></div>
<div class="a" style="left:379px;top:61px;width:16px;height:16px;background:#d03020;border:1px solid #6a1a10"><div class="t" style="left:0;top:1px;width:14px;text-align:center;font-size:14px;font-weight:bold;color:#f8d020">P</div></div>
<div class="a" style="left:379px;top:83px;width:16px;height:16px;background:#d03020;border:1px solid #6a1a10"><div class="t" style="left:0;top:1px;width:14px;text-align:center;font-size:14px;font-weight:bold;color:#fff">m</div></div>
<div class="a" style="left:379px;top:105px;width:16px;height:16px;background:#d03020;border:1px solid #6a1a10"><div class="t" style="left:0;top:1px;width:14px;text-align:center;font-size:14px;font-weight:bold;color:#fff">m</div></div>
<div class="t" style="left:397px;top:64px;font-size:11px;color:#203c64;">LowVolProtect</div>
<div class="t" style="left:397px;top:86px;font-size:11px;color:#203c64;">MaxLineCurr</div>
<div class="t" style="left:397px;top:108px;font-size:11px;color:#203c64;">MaxPhaseCurr</div>
<div class="a" style="left:475px;top:58px;width:34px;height:22px;background:#eef3fa;border:1px solid #c2d3e8"><div class="t" style="left:2px;top:5px;font-size:11px;color:#000">62.0V</div></div>
<div class="a" style="left:475px;top:80px;width:34px;height:22px;background:#eef3fa;border:1px solid #c2d3e8"><div class="t" style="left:2px;top:5px;font-size:11px;color:#000">130A</div></div>
<div class="a" style="left:475px;top:102px;width:34px;height:22px;background:#eef3fa;border:1px solid #c2d3e8"><div class="t" style="left:2px;top:5px;font-size:11px;color:#000">400A</div></div>
<svg class="a" style="left:522px;top:61px" width="16" height="16" viewBox="0 0 16 16"><rect width="16" height="16" fill="#0a2a7a"/><circle cx="8" cy="8" r="7.5" fill="#2a6ad0"/><circle cx="7" cy="6" r="4" fill="#5a9ae8" opacity="0.6"/><path d="M4 4 L11 11 M11 6 L11 11 L6 11" stroke="#fff" stroke-width="2" fill="none"/></svg>
<svg class="a" style="left:522px;top:83px" width="16" height="16" viewBox="0 0 16 16"><rect width="16" height="16" fill="#0a2a7a"/><circle cx="8" cy="8" r="7.5" fill="#2a6ad0"/><circle cx="7" cy="6" r="4" fill="#5a9ae8" opacity="0.6"/><path d="M4 11 L11 4 M6 4 L11 4 L11 9" stroke="#fff" stroke-width="2" fill="none"/></svg>
<div class="t" style="left:540px;top:64px;font-size:11px;color:#203c64;">ThresholdLow</div>
<div class="t" style="left:540px;top:86px;font-size:11px;color:#203c64;">Threshold High</div>
<div class="a" style="left:617px;top:58px;width:35px;height:21px;background:#eef3fa;border:1px solid #c2d3e8"><div class="t" style="left:3px;top:5px;font-size:11px;color:#000">1.10V</div></div>
<div class="a" style="left:624px;top:80px;width:35px;height:21px;background:#eef3fa;border:1px solid #c2d3e8"><div class="t" style="left:3px;top:5px;font-size:11px;color:#000">3.90V</div></div>
<div class="a" style="left:672px;top:61px;width:16px;height:16px;background:#d03020;border:1px solid #6a1a10"><div class="t" style="left:0;top:1px;width:14px;text-align:center;font-size:14px;font-weight:bold;color:#f8d020">P</div></div>
<div class="a" style="left:672px;top:83px;width:16px;height:16px;background:#d03020;border:1px solid #6a1a10"><div class="t" style="left:0;top:1px;width:14px;text-align:center;font-size:14px;font-weight:bold;color:#f8d020">S</div></div>
<svg class="a" style="left:672px;top:105px" width="16" height="16" viewBox="0 0 16 16"><rect width="16" height="16" rx="2" fill="#48b8e8"/><path d="M2 8 L5 5 L5 7 L11 7 L11 5 L14 8 L11 11 L11 9 L5 9 L5 11 Z" fill="#f8f020"/></svg>
<div class="t" style="left:690px;top:64px;font-size:11px;color:#203c64;">Brake</div>
<div class="t" style="left:690px;top:86px;font-size:11px;color:#203c64;">PC13</div>
<div class="t" style="left:690px;top:108px;font-size:11px;color:#203c64;">PhaseOffset</div>
<div class="a" style="left:727px;top:58px;width:70px;height:22px;background:#eef3fa;border:1px solid #c2d3e8"><div class="t" style="left:3px;top:5px;font-size:11px;color:#000">Folat Run</div><div class="a" style="left:57px;top:8px;width:0;height:0;border-left:3px solid transparent;border-right:3px solid transparent;border-top:3px solid #5a6a80"></div></div>
<div class="a" style="left:727px;top:80px;width:70px;height:22px;background:#eef3fa;border:1px solid #c2d3e8"><div class="t" style="left:3px;top:5px;font-size:11px;color:#000">None</div><div class="a" style="left:57px;top:8px;width:0;height:0;border-left:3px solid transparent;border-right:3px solid transparent;border-top:3px solid #5a6a80"></div></div>
<div class="a" style="left:757px;top:102px;width:40px;height:22px;background:#eef3fa;border:1px solid #c2d3e8"><div class="t" style="left:2px;top:5px;font-size:11px;color:#000">282</div><div class="a" style="left:27px;top:5px;width:0;height:0;border-left:3px solid transparent;border-right:3px solid transparent;border-bottom:3px solid #5a6a80"></div><div class="a" style="left:27px;top:13px;width:0;height:0;border-left:3px solid transparent;border-right:3px solid transparent;border-top:3px solid #5a6a80"></div></div>
<div class="t" style="left:800px;top:64px;font-size:11px;color:#203c64;">Parking</div>
<div class="t" style="left:800px;top:86px;font-size:11px;color:#203c64;">Follow</div>
<div class="t" style="left:800px;top:108px;font-size:11px;color:#203c64;">SpeedPulse</div>
<div class="a" style="left:843px;top:58px;width:47px;height:22px;background:#eef3fa;border:1px solid #c2d3e8"><div class="t" style="left:3px;top:5px;font-size:11px;color:#000">Disab</div><div class="a" style="left:34px;top:8px;width:0;height:0;border-left:3px solid transparent;border-right:3px solid transparent;border-top:3px solid #5a6a80"></div></div>
<div class="a" style="left:843px;top:80px;width:47px;height:22px;background:#eef3fa;border:1px solid #c2d3e8"><div class="t" style="left:3px;top:5px;font-size:11px;color:#000">Disab</div><div class="a" style="left:34px;top:8px;width:0;height:0;border-left:3px solid transparent;border-right:3px solid transparent;border-top:3px solid #5a6a80"></div></div>
<div class="a" style="left:867px;top:102px;width:23px;height:22px;background:#eef3fa;border:1px solid #c2d3e8"><div class="t" style="left:2px;top:5px;font-size:11px;color:#000">15</div></div>
<div class="t" style="left:893px;top:64px;font-size:11px;color:#203c64;">ThrottleResp</div>
<div class="t" style="left:893px;top:86px;font-size:11px;color:#203c64;">AccPara</div>
<div class="t" style="left:893px;top:108px;font-size:11px;color:#203c64;">BatteryTotalCap</div>
<div class="a" style="left:969px;top:58px;width:47px;height:22px;background:#eef3fa;border:1px solid #c2d3e8"><div class="t" style="left:3px;top:5px;font-size:11px;color:#000">Line</div><div class="a" style="left:34px;top:8px;width:0;height:0;border-left:3px solid transparent;border-right:3px solid transparent;border-top:3px solid #5a6a80"></div></div>
<div class="a" style="left:976px;top:80px;width:40px;height:22px;background:#eef3fa;border:1px solid #c2d3e8"><div class="t" style="left:3px;top:5px;font-size:11px;color:#000">8</div><div class="a" style="left:27px;top:8px;width:0;height:0;border-left:3px solid transparent;border-right:3px solid transparent;border-top:3px solid #5a6a80"></div></div>
<div class="a" style="left:976px;top:102px;width:40px;height:22px;background:#eef3fa;border:1px solid #c2d3e8"><div class="t" style="left:2px;top:5px;font-size:11px;color:#000">100AH</div></div>
<div class="a" style="left:1029px;top:61px;width:16px;height:16px;background:linear-gradient(#b8c4d2,#98a8ba);border:1px solid #8898aa"></div>
<div class="a" style="left:1029px;top:83px;width:16px;height:16px;background:linear-gradient(#b8c4d2,#98a8ba);border:1px solid #8898aa"></div>
<div class="t" style="left:1047px;top:64px;font-size:11px;color:#98a4b4;">Date</div>
<div class="t" style="left:1047px;top:86px;font-size:11px;color:#98a4b4;">Time</div>
<div class="a" style="left:1076px;top:59px;width:72px;height:41px;background:#000;box-shadow:0 0 1px #666"><div class="a" style="left:12px;top:15px;width:47px;height:12px;background:linear-gradient(#bbb 0,#ccc 45%,#fff 55%,#eee 100%)"></div></div>
<svg class="a" style="left:1029px;top:105px" width="16" height="16" viewBox="0 0 16 16"><rect x="0.5" y="0.5" width="15" height="15" fill="#1a3a70" stroke="#0a1a40"/><rect x="3" y="2" width="2" height="12" fill="#f0e040"/><rect x="7" y="2" width="2" height="12" fill="#f0e040"/><rect x="11" y="2" width="2" height="12" fill="#f0e040"/></svg>
<div class="t" style="left:1047px;top:108px;font-size:11px;color:#203c64;">No.</div>
<div class="a" style="left:1069px;top:102px;width:159px;height:22px;background:#eef3fa;border:1px solid #c2d3e8"><div class="t" style="left:2px;top:5px;font-size:11px;color:#000">DY72V150AB_2217_28A.2.0</div></div>
<svg class="a" style="left:1236px;top:63px" width="30" height="30" viewBox="0 0 30 30"><defs><linearGradient id="sg" x1="0" y1="0" x2="0" y2="1"><stop offset="0" stop-color="#3048b8"/><stop offset="0.5" stop-color="#2a70d8"/><stop offset="1" stop-color="#38c0f4"/></linearGradient></defs><circle cx="15.25" cy="14.65" r="14.2" fill="url(#sg)"/><path d="M15.25 3.5 L15.25 17" stroke="#fff" stroke-width="3"/><path d="M8.5 11.5 L15.25 18 L22 11.5" stroke="#f4f4ff" stroke-width="3.4" fill="none"/></svg>
<div class="t" style="left:1238px;top:98px;font-size:11px;color:#203c64;">Save</div>
<div class="a" style="left:0;top:704px;width:1366px;height:24px;background:linear-gradient(#dae9fa,#c2d6f0);border-top:1px solid #5a6672"></div>
<div class="a" style="left:1292px;top:704px;width:74px;height:24px;background:linear-gradient(#b4cdf0,#95b6e6);border-left:1px solid #9ab"></div>
<div class="a" style="left:0;top:728px;width:1366px;height:40px;background:#0b1620"></div>
<div class="a" style="left:1166px;top:146px;width:200px;height:20px;background:linear-gradient(#d2e3f6,#c2d7f0)"></div>
<div class="t" style="left:1170px;top:151px;font-size:11px;color:#3a5a8a">?????</div>
<svg class="a" style="left:1334px;top:150px" width="10" height="11" viewBox="0 0 10 11"><path d="M3 1 L7 1 L7 6 L8 6 L8 7 L5.5 7 L5.5 10 L4.5 10 L4.5 7 L2 7 L2 6 L3 6 Z M4 2 L4 6 L5 6 L5 2 Z" fill="#2a4a7a"/></svg>
<svg class="a" style="left:1350px;top:150px" width="10" height="10" viewBox="0 0 10 10"><path d="M1 1 L9 9 M9 1 L1 9" stroke="#2a4a7a" stroke-width="1.6"/></svg>
<div class="a" style="left:1166px;top:166px;width:200px;height:20px;background:#fff;border:1px solid #6a6a6a"></div>
<div class="t" style="left:1170px;top:170px;font-size:12px;color:#000">ÐÂ²ÎÊýÎÄ¼þ</div>
<svg class="a" style="left:1172px;top:190px" width="16" height="16" viewBox="0 0 16 16"><rect x="0.5" y="1.5" width="5" height="5" fill="#fff" stroke="#555"/><path d="M2 4 L4 4 M3 3 L3 5" stroke="#000"/><rect x="0.5" y="9.5" width="5" height="5" fill="#fff" stroke="#555"/><path d="M2 12 L4 12 M3 11 L3 13" stroke="#000"/><path d="M8 2 L15 2 M8 4 L15 4 M8 6 L15 6 M8 10 L15 10 M8 12 L15 12 M8 14 L15 14" stroke="#7a8aa0" stroke-width="1" stroke-dasharray="1 1"/></svg>
<svg class="a" style="left:1193px;top:188px" width="18" height="19" viewBox="0 0 18 19"><text x="0" y="8" font-size="9" font-family="Liberation Serif" fill="#1a4aa0">A</text><text x="0" y="17" font-size="9" font-family="Liberation Serif" fill="#c02020">Z</text><path d="M12 1 L12 16 M9.5 13 L12 17 L14.5 13" stroke="#000" stroke-width="1.2" fill="none"/></svg>
<svg class="a" style="left:1236px;top:189px" width="18" height="17" viewBox="0 0 18 17"><rect x="0.5" y="0.5" width="17" height="16" fill="#fff" stroke="#7a1a1a"/><path d="M6 1 L12 1 L12 8 L16 8 L9 16 L2 8 L6 8 Z" fill="#e01818"/></svg>
<div class="a" style="left:1166px;top:209px;width:183px;height:431px;background:#fff;overflow:hidden">
<div class="a" style="left:0;top:0;width:18px;height:431px;background:#d0e0f2"></div>
<div class="a" style="left:0;top:0px;width:183px;height:19px;background:#d0e0f2"></div>
<div class="a" style="left:6px;top:5px;width:9px;height:9px;border:1px solid #8a9ab0;background:#fff"></div><div class="a" style="left:8px;top:9px;width:5px;height:1px;background:#333"></div>
<div class="t" style="left:23px;top:3px;font-size:12px;font-weight:bold;color:#a8bcd8">Paras</div>
<div class="a" style="left:18px;top:19px;width:165px;height:19px;border-bottom:1px solid #e3e9f0"></div>
<div class="a" style="left:100px;top:19px;width:1px;height:19px;background:#e3e9f0"></div>
<div class="t" style="left:22px;top:22px;font-size:12px;color:#000">CustomCode</div>
<div class="t" style="left:104px;top:22px;font-size:12px;color:#000">0</div>
<div class="a" style="left:18px;top:38px;width:165px;height:19px;border-bottom:1px solid #e3e9f0"></div>
<div class="a" style="left:100px;top:38px;width:1px;height:19px;background:#e3e9f0"></div>
<div class="t" style="left:22px;top:41px;font-size:12px;color:#000">PolePairs</div>
<div class="t" style="left:104px;top:41px;font-size:12px;color:#000">0</div>
<div class="a" style="left:18px;top:57px;width:165px;height:19px;border-bottom:1px solid #e3e9f0"></div>
<div class="a" style="left:100px;top:57px;width:1px;height:19px;background:#e3e9f0"></div>
<div class="t" style="left:22px;top:60px;font-size:12px;color:#000">Dir</div>
<div class="t" style="left:104px;top:60px;font-size:12px;color:#000">0</div>
<div class="a" style="left:18px;top:76px;width:165px;height:19px;border-bottom:1px solid #e3e9f0"></div>
<div class="a" style="left:100px;top:76px;width:1px;height:19px;background:#e3e9f0"></div>
<div class="t" style="left:22px;top:79px;font-size:12px;color:#000">RatedSpeed</div>
<div class="t" style="left:104px;top:79px;font-size:12px;color:#000">2491</div>
<div class="a" style="left:18px;top:95px;width:165px;height:19px;border-bottom:1px solid #e3e9f0"></div>
<div class="a" style="left:100px;top:95px;width:1px;height:19px;background:#e3e9f0"></div>
<div class="t" style="left:22px;top:98px;font-size:12px;color:#000">MaxSpeed</div>
<div class="t" style="left:104px;top:98px;font-size:12px;color:#000">5005</div>
<div class="a" style="left:18px;top:114px;width:165px;height:19px;border-bottom:1px solid #e3e9f0"></div>
<div class="a" style="left:100px;top:114px;width:1px;height:19px;background:#e3e9f0"></div>
<div class="t" style="left:22px;top:117px;font-size:12px;color:#000">LowSpeed</div>
<div class="t" style="left:104px;top:117px;font-size:12px;color:#000">30</div>
<div class="a" style="left:18px;top:133px;width:165px;height:19px;border-bottom:1px solid #e3e9f0"></div>
<div class="a" style="left:100px;top:133px;width:1px;height:19px;background:#e3e9f0"></div>
<div class="t" style="left:22px;top:136px;font-size:12px;color:#000">BackSpeed</div>
<div class="t" style="left:104px;top:136px;font-size:12px;color:#000">90</div>
<div class="a" style="left:18px;top:152px;width:165px;height:19px;border-bottom:1px solid #e3e9f0"></div>
<div class="a" style="left:100px;top:152px;width:1px;height:19px;background:#e3e9f0"></div>
<div class="t" style="left:22px;top:155px;font-size:12px;color:#000">RatedVol</div>
<div class="t" style="left:104px;top:155px;font-size:12px;color:#000">60V</div>
<div class="a" style="left:18px;top:171px;width:165px;height:19px;border-bottom:1px solid #e3e9f0"></div>
<div class="a" style="left:100px;top:171px;width:1px;height:19px;background:#e3e9f0"></div>
<div class="t" style="left:22px;top:174px;font-size:12px;color:#000">RatedPower</div>
<div class="t" style="left:104px;top:174px;font-size:12px;color:#000">2800W</div>
<div class="a" style="left:18px;top:190px;width:165px;height:19px;border-bottom:1px solid #e3e9f0"></div>
<div class="a" style="left:100px;top:190px;width:1px;height:19px;background:#e3e9f0"></div>
<div class="t" style="left:22px;top:193px;font-size:12px;color:#000">MotorTemp</div>
<div class="t" style="left:104px;top:193px;font-size:12px;color:#000">150</div>
<div class="a" style="left:18px;top:209px;width:165px;height:19px;border-bottom:1px solid #e3e9f0"></div>
<div class="a" style="left:100px;top:209px;width:1px;height:19px;background:#e3e9f0"></div>
<div class="t" style="left:22px;top:212px;font-size:12px;color:#000">LovVol</div>
<div class="t" style="left:104px;top:212px;font-size:12px;color:#000">210</div>
<div class="a" style="left:18px;top:228px;width:165px;height:19px;border-bottom:1px solid #e3e9f0"></div>
<div class="a" style="left:100px;top:228px;width:1px;height:19px;background:#e3e9f0"></div>
<div class="t" style="left:22px;top:231px;font-size:12px;color:#000">MaxLineCurr</div>
<div class="t" style="left:104px;top:231px;font-size:12px;color:#000">80A</div>
<div class="a" style="left:18px;top:247px;width:165px;height:19px;border-bottom:1px solid #e3e9f0"></div>
<div class="a" style="left:100px;top:247px;width:1px;height:19px;background:#e3e9f0"></div>
<div class="t" style="left:22px;top:250px;font-size:12px;color:#000">MaxPhaseC...</div>
<div class="t" style="left:104px;top:250px;font-size:12px;color:#000">80A</div>
<div class="a" style="left:18px;top:266px;width:165px;height:19px;border-bottom:1px solid #e3e9f0"></div>
<div class="a" style="left:100px;top:266px;width:1px;height:19px;background:#e3e9f0"></div>
<div class="t" style="left:22px;top:269px;font-size:12px;color:#000">ThrottleMin</div>
<div class="t" style="left:104px;top:269px;font-size:12px;color:#000">10%</div>
<div class="a" style="left:18px;top:285px;width:165px;height:19px;border-bottom:1px solid #e3e9f0"></div>
<div class="a" style="left:100px;top:285px;width:1px;height:19px;background:#e3e9f0"></div>
<div class="t" style="left:22px;top:288px;font-size:12px;color:#000">ThrottleMax</div>
<div class="t" style="left:104px;top:288px;font-size:12px;color:#000">90%</div>
<div class="a" style="left:18px;top:304px;width:165px;height:19px;border-bottom:1px solid #e3e9f0"></div>
<div class="a" style="left:100px;top:304px;width:1px;height:19px;background:#e3e9f0"></div>
<div class="t" style="left:22px;top:307px;font-size:12px;color:#000">Port1Func</div>
<div class="t" style="left:104px;top:307px;font-size:12px;color:#000">Valid</div>
<div class="a" style="left:18px;top:323px;width:165px;height:19px;border-bottom:1px solid #e3e9f0"></div>
<div class="a" style="left:100px;top:323px;width:1px;height:19px;background:#e3e9f0"></div>
<div class="t" style="left:22px;top:326px;font-size:12px;color:#000">Port5Func</div>
<div class="t" style="left:104px;top:326px;font-size:12px;color:#000">Valid</div>
<div class="a" style="left:0;top:342px;width:183px;height:19px;background:#d0e0f2"></div>
<div class="a" style="left:6px;top:347px;width:9px;height:9px;border:1px solid #8a9ab0;background:#fff"></div><div class="a" style="left:8px;top:351px;width:5px;height:1px;background:#333"></div>
<div class="t" style="left:23px;top:345px;font-size:12px;font-weight:bold;color:#a8bcd8">Status</div>
<div class="a" style="left:18px;top:361px;width:165px;height:19px;border-bottom:1px solid #e3e9f0"></div>
<div class="a" style="left:100px;top:361px;width:1px;height:19px;background:#e3e9f0"></div>
<div class="t" style="left:22px;top:364px;font-size:12px;color:#000">Gear</div>
<div class="t" style="left:104px;top:364px;font-size:12px;color:#000">Empty</div>
<div class="a" style="left:18px;top:380px;width:165px;height:19px;border-bottom:1px solid #e3e9f0"></div>
<div class="a" style="left:100px;top:380px;width:1px;height:19px;background:#e3e9f0"></div>
<div class="t" style="left:22px;top:383px;font-size:12px;color:#000">Roll</div>
<div class="t" style="left:104px;top:383px;font-size:12px;color:#000">Stop</div>
<div class="a" style="left:18px;top:399px;width:165px;height:19px;border-bottom:1px solid #e3e9f0"></div>
<div class="a" style="left:100px;top:399px;width:1px;height:19px;background:#e3e9f0"></div>
<div class="t" style="left:22px;top:402px;font-size:12px;color:#000">FOC Temp</div>
<div class="t" style="left:104px;top:402px;font-size:12px;color:#000">11¡æ</div>
<div class="a" style="left:18px;top:418px;width:165px;height:19px;border-bottom:1px solid #e3e9f0"></div>
<div class="a" style="left:100px;top:418px;width:1px;height:19px;background:#e3e9f0"></div>
<div class="t" style="left:22px;top:421px;font-size:12px;color:#000">Throttle Vol</div>
<div class="t" style="left:104px;top:421px;font-size:12px;color:#000">0.85V</div>
</div>
<div class="a" style="left:1349px;top:209px;width:17px;height:431px;background:#f2f2f2"></div>
<div class="a" style="left:1349px;top:210px;width:17px;height:16px;background:#ececec;border-right:1px solid #888;border-bottom:1px solid #888"></div>
<div class="a" style="left:1354px;top:215px;width:0;height:0;border-left:4px solid transparent;border-right:4px solid transparent;border-bottom:4px solid #000"></div>
<div class="a" style="left:1349px;top:226px;width:17px;height:156px;background:#e8e8e8;border-right:2px solid #777;border-bottom:2px solid #777"></div>
<div class="a" style="left:1349px;top:622px;width:17px;height:17px;background:#ececec;border-right:1px solid #888;border-bottom:2px solid #888"></div>
<div class="a" style="left:1354px;top:628px;width:0;height:0;border-left:4px solid transparent;border-right:4px solid transparent;border-top:4px solid #000"></div>
<div class="a" style="left:1166px;top:643px;width:200px;height:60px;background:#d4e3f3;border:1px solid #b4c8e0"></div>
<div class="t" style="left:1171px;top:649px;font-size:12px;font-weight:bold;color:#000">Paras</div>
<div class="t" style="left:9px;top:710px;font-size:11px;color:#1e3a66">Syet...</div>
<div class="t" style="left:1309px;top:710px;font-size:11px;color:#3a5a8a">±à°Â0</div>
<svg class="a" style="left:16px;top:740px" width="17" height="17" viewBox="0 0 17 17"><path d="M0 2.3 L7 1.3 L7 8 L0 8 Z M8 1.1 L17 0 L17 8 L8 8 Z M0 9 L7 9 L7 15.7 L0 14.7 Z M8 9 L17 9 L17 17 L8 15.9 Z" fill="#fff"/></svg>
<div class="a" style="left:48px;top:728px;width:344px;height:40px;background:#f2f2f2;border:1px solid #dcdcdc"></div>
<svg class="a" style="left:60px;top:738px" width="20" height="20" viewBox="0 0 20 20"><circle cx="12" cy="8" r="6" stroke="#222" stroke-width="1.5" fill="none"/><path d="M7.5 12.5 L1.5 18.5" stroke="#222" stroke-width="1.8"/></svg>
<div class="t" style="left:88px;top:740px;font-size:15px;color:#333">Zur Suche Text hier eingeben</div>
<svg class="a" style="left:312px;top:729px" width="80" height="39" viewBox="0 0 80 39"><path d="M4 39 C18 24 40 19 52 19 C66 19 77 24 80 34 L80 39 Z" fill="#e02a78"/><path d="M11 39 C24 27 42 24 52 24 C64 24 74 28 80 37 L80 39 Z" fill="#3cba2a"/><path d="M33 26 L80 38 M47 39 L56 31" stroke="#e8f8c0" stroke-width="1" opacity="0.85"/><path d="M47 6 L47 30 M58 8 L58 34" stroke="#e8d8e8" stroke-width="1.3"/><ellipse cx="23" cy="14.6" rx="9.5" ry="4.6" transform="rotate(-38 23 14.6)" fill="#c8c0f4" stroke="#8a2a7a" stroke-width="1.4"/><path d="M67.8 6 L69.3 10 L73 11.3 L69.3 12.6 L67.8 16.5 L66.3 12.6 L62.5 11.3 L66.3 10 Z" fill="#d88ae8"/><circle cx="37" cy="16.8" r="2" fill="#f0c040"/><circle cx="9.6" cy="9.4" r="1.5" fill="#58c8d0"/></svg>
<div class="a" style="left:407px;top:740px;width:17px;height:17px;border:2px solid #fff;border-radius:50%"></div>
<svg class="a" style="left:454px;top:739px" width="20" height="18" viewBox="0 0 20 18"><rect x="1" y="4" width="12" height="10" stroke="#fff" stroke-width="1.4" fill="none"/><path d="M1 1 L13 1 M1 17 L13 17" stroke="#fff" stroke-width="1.4"/><path d="M17 1 L17 5 M17 7 L17 11 M17 13 L17 17" stroke="#fff" stroke-width="1.6"/></svg>
<svg class="a" style="left:502px;top:735px" width="26" height="26" viewBox="0 0 26 26"><defs><linearGradient id="eg" x1="0" y1="0" x2="1" y2="1"><stop offset="0" stop-color="#3ad0a0"/><stop offset="0.5" stop-color="#1a9ad8"/><stop offset="1" stop-color="#0a4aa0"/></linearGradient></defs><circle cx="13" cy="13" r="12" fill="url(#eg)"/><path d="M6 15 Q8 7 15 8 Q20 9 19 14 L10 14 Q11 19 18 18 Q13 23 8 20 Q5 18 6 15 Z" fill="#0b1620"/></svg>
<div class="a" style="left:495px;top:765px;width:40px;height:3px;background:#8ab4e8"></div>
<svg class="a" style="left:552px;top:737px" width="24" height="22" viewBox="0 0 24 22"><path d="M0 2 L9 2 L11 4 L24 4 L24 21 L0 21 Z" fill="#e8b830"/><path d="M0 7 L24 7 L24 21 L0 21 Z" fill="#f8d870"/><rect x="7" y="12" width="10" height="9" fill="#3a8ad8"/><rect x="9" y="15" width="6" height="6" fill="#f8d870"/></svg>
<div class="a" style="left:544px;top:765px;width:40px;height:3px;background:#8ab4e8"></div>
<svg class="a" style="left:600px;top:735px" width="24" height="25" viewBox="0 0 24 25"><path d="M7 7 L7 4 Q12 0 17 4 L17 7" stroke="#3a9ad8" stroke-width="1.8" fill="none"/><rect x="1" y="7" width="22" height="17" rx="2" fill="#f4f4f4"/><rect x="7" y="11" width="4.5" height="4.5" fill="#f05030"/><rect x="12.5" y="11" width="4.5" height="4.5" fill="#70c030"/><rect x="7" y="16.5" width="4.5" height="4.5" fill="#30a0f0"/><rect x="12.5" y="16.5" width="4.5" height="4.5" fill="#f8c020"/></svg>
<svg class="a" style="left:649px;top:736px" width="26" height="22" viewBox="0 0 26 22"><path d="M0 8 L13 0 L26 8 L26 22 L0 22 Z" fill="#1a78c8"/><path d="M0 8 L13 16 L26 8 L26 22 L0 22 Z" fill="#40a8f0"/><path d="M3 8 L13 3 L23 8 L13 14 Z" fill="#fff"/></svg>
<div class="a" style="left:687px;top:728px;width:48px;height:40px;background:#3a444e"></div>
<div class="a" style="left:687px;top:765px;width:48px;height:3px;background:#8ab4e8"></div>
<svg class="a" style="left:698px;top:735px" width="26" height="26" viewBox="0 0 26 26"><circle cx="13" cy="13" r="12" fill="#2a1a5a" stroke="#6a2a8a" stroke-width="1"/><text x="3" y="18" font-size="12" font-weight="bold" font-family="Liberation Sans" fill="#e02040">F</text><text x="10" y="18" font-size="12" font-weight="bold" font-family="Liberation Sans" fill="#e02040">D</text><path d="M21 7 A6 6 0 1 0 21 19" stroke="#40c040" stroke-width="2" fill="none"/></svg>
<div class="a" style="left:997px;top:738px;width:20px;height:20px;border-radius:50%;background:radial-gradient(circle at 40% 35%,#ffb030,#f07010)"></div>
<div class="t" style="left:1027px;top:740px;font-size:14px;color:#fff">12°C&nbsp;&nbsp;Sonnig</div>
<svg class="a" style="left:1131px;top:742px" width="14" height="9" viewBox="0 0 14 9"><path d="M1 8 L7 2 L13 8" stroke="#fff" stroke-width="1.3" fill="none"/></svg>
<svg class="a" style="left:1156px;top:739px" width="14" height="18" viewBox="0 0 14 18"><path d="M3 2 Q1 9 3 16" stroke="#fff" stroke-width="1" fill="none"/><rect x="2.5" y="5" width="6" height="8" stroke="#fff" stroke-width="1.2" fill="none"/><path d="M9 7 L12.5 5 L12.5 13 L9 11" stroke="#fff" stroke-width="1.2" fill="none"/><path d="M11 2 Q13 9 11 16" stroke="#fff" stroke-width="0.8" fill="none" opacity="0.5"/></svg>
<svg class="a" style="left:1180px;top:742px" width="16" height="10" viewBox="0 0 16 10"><rect x="0.7" y="0.7" width="13" height="8.6" stroke="#fff" stroke-width="1.3" fill="none"/><rect x="2.5" y="2.5" width="9.5" height="5" fill="#fff"/><rect x="14" y="3" width="1.5" height="4" fill="#fff"/></svg>
<svg class="a" style="left:1205px;top:739px" width="18" height="16" viewBox="0 0 18 16"><path d="M2 9 Q9 2 16 9" stroke="#777" stroke-width="1.4" fill="none"/><path d="M5 11.5 Q9 7 13 11.5" stroke="#777" stroke-width="1.4" fill="none"/><path d="M1 6 Q9 -2 17 6" stroke="#777" stroke-width="1.2" fill="none"/><circle cx="11" cy="14" r="1.5" fill="#fff"/></svg>
<svg class="a" style="left:1226px;top:739px" width="20" height="17" viewBox="0 0 20 17"><path d="M1 6 L4 6 L8 2 L8 15 L4 11 L1 11 Z" stroke="#fff" stroke-width="1.2" fill="none"/><path d="M11 5.5 Q13 8.5 11 11.5 M13.5 3.5 Q17 8.5 13.5 13.5 M16 1.5 Q20.5 8.5 16 15.5" stroke="#fff" stroke-width="1.2" fill="none"/></svg>
<div class="t" style="left:1266px;top:733px;font-size:12px;color:#fff">12:42</div>
<div class="t" style="left:1253px;top:752px;font-size:12px;color:#fff">09.10.2022</div>
<svg class="a" style="left:1324px;top:738px" width="18" height="18" viewBox="0 0 18 18"><path d="M0.7 0.7 L17.3 0.7 L17.3 13 L11 13 L9 16.5 L7 13 L0.7 13 Z" stroke="#fff" stroke-width="1.3" fill="none"/></svg>
</body></html>
